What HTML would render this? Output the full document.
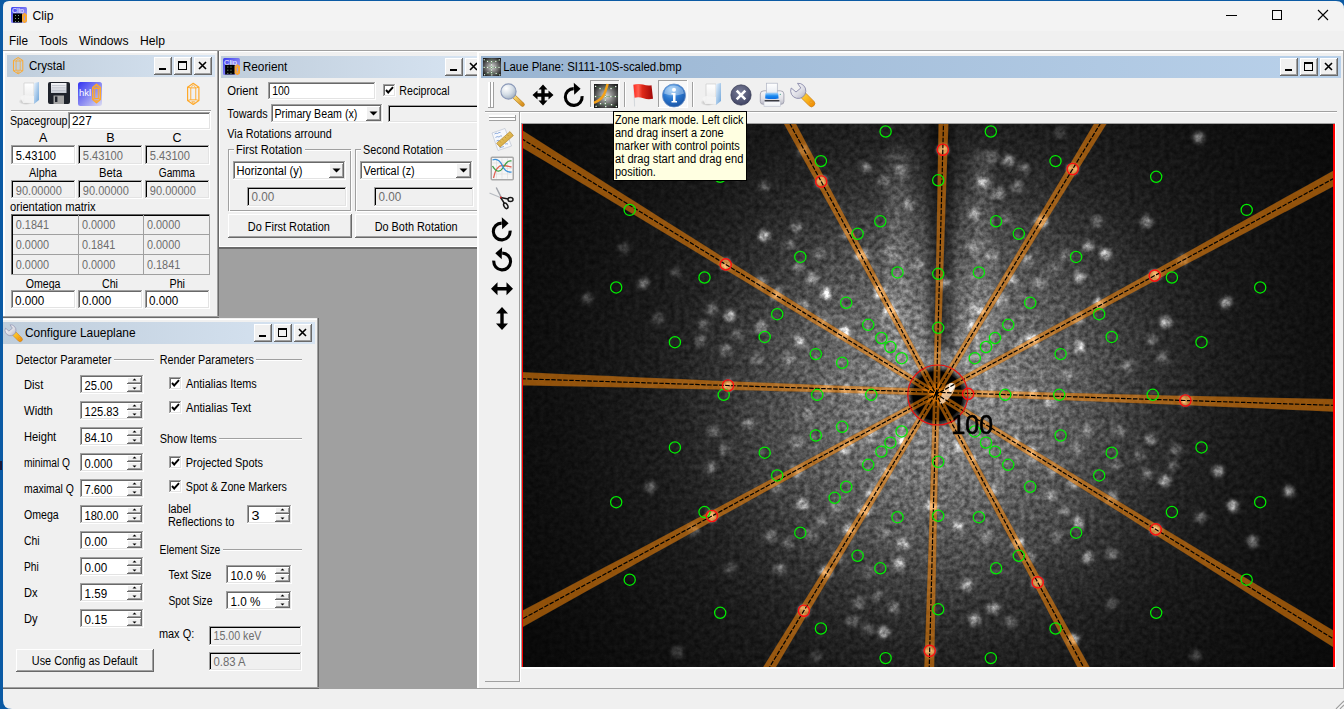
<!DOCTYPE html><html><head><meta charset="utf-8"><style>html,body{margin:0;padding:0;background:#f0f0f0;overflow:hidden}svg{display:block}text{font-family:"Liberation Sans",sans-serif}</style></head><body><svg width="1344" height="709" viewBox="0 0 1344 709" font-family="Liberation Sans" shape-rendering="auto">
<rect x="0" y="0" width="1344" height="709" fill="#f0f0f0" />
<rect x="0" y="0" width="1344" height="31" fill="#f3f3f3" />
<rect x="0" y="31" width="1344" height="19" fill="#f0f0f0" />
<g transform="translate(11,7) scale(1.0)"><linearGradient id="appg" x1="0" y1="0" x2="1" y2="1"><stop offset="0" stop-color="#3a3af0"/><stop offset="1" stop-color="#b8b8f4"/></linearGradient><rect x="0" y="0" width="16" height="16" rx="1.5" fill="url(#appg)"/><text x="1" y="6.3" font-size="7" fill="#fff" font-family="Liberation Sans" textLength="12" lengthAdjust="spacingAndGlyphs">Clip</text><rect x="2" y="6.5" width="9" height="9" fill="#000"/><g fill="#7a9a7a"><rect x="4" y="8" width="1" height="1"/><rect x="7" y="8" width="1" height="1"/><rect x="4" y="11" width="1" height="1"/><rect x="7" y="11" width="1" height="1"/><rect x="4" y="14" width="1" height="1"/><rect x="7" y="14" width="1" height="1"/></g></g>
<g fill="none" stroke="#ffa828" stroke-width="1.2" stroke-linejoin="round"><path d="M24.5 13.6 L26.4 15.0 L26.4 21.0 L24.5 22.4 L22.6 21.0 L22.6 15.0 Z"/><path d="M22.6 15.0 L23.25 15.72 L25.75 15.72 L26.4 15.0" stroke-width="0.96"/><path d="M22.6 21.0 L23.25 20.28 L25.75 20.28 L26.4 21.0" stroke-width="0.96"/><path d="M23.5 15.72 L23.5 20.28 M25.5 15.72 L25.5 20.28" stroke-width="0.8999999999999999"/><path d="M23.5 15.72 L24.5 13.9 L25.5 15.72" stroke-width="0.72"/><path d="M23.9 21.5 L24.5 22.3 L25.1 21.5 Z" stroke-width="0.72"/></g>
<text x="32.5" y="20" font-size="12" fill="#000" textLength="21.0" lengthAdjust="spacingAndGlyphs" >Clip</text>
<rect x="1226" y="15" width="11" height="1" fill="#000" />
<rect x="1272.5" y="10.5" width="9" height="9" fill="none" stroke="#000" stroke-width="1"/>
<path d="M1318 10 L1328 20 M1328 10 L1318 20" stroke="#000" stroke-width="1.1"/>
<text x="9.0" y="45" font-size="12" fill="#000" textLength="19.0" lengthAdjust="spacingAndGlyphs" >File</text>
<text x="39.0" y="45" font-size="12" fill="#000" textLength="28.5" lengthAdjust="spacingAndGlyphs" >Tools</text>
<text x="79.0" y="45" font-size="12" fill="#000" textLength="49.5" lengthAdjust="spacingAndGlyphs" >Windows</text>
<text x="140.0" y="45" font-size="12" fill="#000" textLength="25.0" lengthAdjust="spacingAndGlyphs" >Help</text>
<rect x="3" y="50" width="1341" height="1" fill="#a0a0a0" />
<rect x="3" y="51" width="1341" height="638" fill="#a0a0a0" />
<rect x="219" y="51" width="260" height="198" fill="#f0f0f0" />
<rect x="219" y="51" width="260" height="1" fill="#ffffff" />
<rect x="219" y="51" width="1" height="198" fill="#ffffff" />
<rect x="219" y="246" width="260" height="1" fill="#ffffff" />
<rect x="219" y="247" width="260" height="1" fill="#696969" />
<rect x="219" y="248" width="260" height="1" fill="#696969" />
<linearGradient id="tgr" x1="0" x2="1" y1="0" y2="0"><stop offset="0" stop-color="#bfcddb"/><stop offset="1" stop-color="#d7e4f2"/></linearGradient>
<rect x="221" y="56" width="256" height="22" fill="url(#tgr)" />
<g transform="translate(223,58) scale(1.0625)"><linearGradient id="appg" x1="0" y1="0" x2="1" y2="1"><stop offset="0" stop-color="#3a3af0"/><stop offset="1" stop-color="#b8b8f4"/></linearGradient><rect x="0" y="0" width="16" height="16" rx="1.5" fill="url(#appg)"/><text x="1" y="6.3" font-size="7" fill="#fff" font-family="Liberation Sans" textLength="12" lengthAdjust="spacingAndGlyphs">Clip</text><rect x="2" y="6.5" width="9" height="9" fill="#000"/><g fill="#7a9a7a"><rect x="4" y="8" width="1" height="1"/><rect x="7" y="8" width="1" height="1"/><rect x="4" y="11" width="1" height="1"/><rect x="7" y="11" width="1" height="1"/><rect x="4" y="14" width="1" height="1"/><rect x="7" y="14" width="1" height="1"/></g></g>
<g fill="none" stroke="#ffa828" stroke-width="1.275" stroke-linejoin="round"><path d="M237.34375 65.0125 L239.3625 66.5 L239.3625 72.875 L237.34375 74.3625 L235.325 72.875 L235.325 66.5 Z"/><path d="M235.325 66.5 L236.015625 67.265 L238.671875 67.265 L239.3625 66.5" stroke-width="1.02"/><path d="M235.325 72.875 L236.015625 72.11 L238.671875 72.11 L239.3625 72.875" stroke-width="1.02"/><path d="M236.28125 67.265 L236.28125 72.11 M238.40625 67.265 L238.40625 72.11" stroke-width="0.9562499999999999"/><path d="M236.28125 67.265 L237.34375 65.33125 L238.40625 67.265" stroke-width="0.7649999999999999"/><path d="M236.70625 73.40625 L237.34375 74.25625 L237.98125 73.40625 Z" stroke-width="0.7649999999999999"/></g>
<text x="242.7" y="71" font-size="12" fill="#000" textLength="44.7" lengthAdjust="spacingAndGlyphs" >Reorient</text>
<rect x="445" y="58" width="18" height="18" fill="#f0f0f0" />
<rect x="445" y="58" width="17" height="1" fill="#ffffff" />
<rect x="445" y="58" width="1" height="17" fill="#ffffff" />
<rect x="446" y="74" width="16" height="1" fill="#a0a0a0" />
<rect x="461" y="59" width="1" height="16" fill="#a0a0a0" />
<rect x="445" y="75" width="18" height="1" fill="#696969" />
<rect x="462" y="58" width="1" height="18" fill="#696969" />
<rect x="450" y="69" width="7" height="2" fill="#000" />
<rect x="465" y="58" width="18" height="18" fill="#f0f0f0" />
<rect x="465" y="58" width="17" height="1" fill="#ffffff" />
<rect x="465" y="58" width="1" height="17" fill="#ffffff" />
<rect x="466" y="74" width="16" height="1" fill="#a0a0a0" />
<rect x="481" y="59" width="1" height="16" fill="#a0a0a0" />
<rect x="465" y="75" width="18" height="1" fill="#696969" />
<rect x="482" y="58" width="1" height="18" fill="#696969" />
<path d="M470 63 L477 70 M477 63 L470 70" stroke="#000" stroke-width="1.6" fill="none"/>
<text x="227.2" y="95" font-size="12" fill="#000" textLength="30.8" lengthAdjust="spacingAndGlyphs" >Orient</text>
<rect x="268" y="82" width="108" height="18" fill="#ffffff" />
<rect x="268" y="82" width="107" height="1" fill="#a0a0a0" />
<rect x="268" y="82" width="1" height="17" fill="#a0a0a0" />
<rect x="269" y="83" width="105" height="1" fill="#696969" />
<rect x="269" y="83" width="1" height="15" fill="#696969" />
<rect x="269" y="98" width="106" height="1" fill="#e3e3e3" />
<rect x="374" y="83" width="1" height="16" fill="#e3e3e3" />
<rect x="268" y="99" width="108" height="1" fill="#ffffff" />
<rect x="375" y="82" width="1" height="18" fill="#ffffff" />
<text x="272.2" y="95" font-size="12" fill="#000" textLength="17.5" lengthAdjust="spacingAndGlyphs" >100</text>
<rect x="383" y="84" width="13" height="13" fill="#ffffff" />
<rect x="383" y="84" width="12" height="1" fill="#a0a0a0" />
<rect x="383" y="84" width="1" height="12" fill="#a0a0a0" />
<rect x="384" y="85" width="10" height="1" fill="#696969" />
<rect x="384" y="85" width="1" height="10" fill="#696969" />
<rect x="384" y="95" width="11" height="1" fill="#e3e3e3" />
<rect x="394" y="85" width="1" height="11" fill="#e3e3e3" />
<rect x="383" y="96" width="13" height="1" fill="#ffffff" />
<rect x="395" y="84" width="1" height="13" fill="#ffffff" />
<path d="M386 90 L388.2 92.5 L393 87.2" stroke="#000" stroke-width="1.9" fill="none"/>
<text x="399.3" y="95" font-size="12" fill="#000" textLength="50.3" lengthAdjust="spacingAndGlyphs" >Reciprocal</text>
<text x="227.3" y="118" font-size="12" fill="#000" textLength="40.3" lengthAdjust="spacingAndGlyphs" >Towards</text>
<rect x="271" y="104" width="112" height="19" fill="#ffffff" />
<rect x="271" y="104" width="111" height="1" fill="#a0a0a0" />
<rect x="271" y="104" width="1" height="18" fill="#a0a0a0" />
<rect x="272" y="105" width="109" height="1" fill="#696969" />
<rect x="272" y="105" width="1" height="16" fill="#696969" />
<rect x="272" y="121" width="110" height="1" fill="#e3e3e3" />
<rect x="381" y="105" width="1" height="17" fill="#e3e3e3" />
<rect x="271" y="122" width="112" height="1" fill="#ffffff" />
<rect x="382" y="104" width="1" height="19" fill="#ffffff" />
<rect x="366" y="106" width="15" height="15" fill="#f0f0f0" />
<rect x="366" y="106" width="14" height="1" fill="#ffffff" />
<rect x="366" y="106" width="1" height="14" fill="#ffffff" />
<rect x="367" y="119" width="13" height="1" fill="#a0a0a0" />
<rect x="379" y="107" width="1" height="13" fill="#a0a0a0" />
<rect x="366" y="120" width="15" height="1" fill="#696969" />
<rect x="380" y="106" width="1" height="15" fill="#696969" />
<path d="M369.5 111.5 L377.5 111.5 L373.5 115.5Z" fill="#000"/>
<text x="274.5" y="118" font-size="12" fill="#000" textLength="82.8" lengthAdjust="spacingAndGlyphs" >Primary Beam (x)</text>
<rect x="388" y="105" width="100" height="18" fill="#f0f0f0" />
<rect x="388" y="105" width="99" height="1" fill="#a0a0a0" />
<rect x="388" y="105" width="1" height="17" fill="#a0a0a0" />
<rect x="389" y="106" width="97" height="1" fill="#000" />
<rect x="389" y="106" width="1" height="15" fill="#000" />
<rect x="389" y="121" width="98" height="1" fill="#e3e3e3" />
<rect x="486" y="106" width="1" height="16" fill="#e3e3e3" />
<rect x="388" y="122" width="100" height="1" fill="#ffffff" />
<rect x="487" y="105" width="1" height="18" fill="#ffffff" />
<text x="227.3" y="138" font-size="12" fill="#000" textLength="104.4" lengthAdjust="spacingAndGlyphs" >Via Rotations arround</text>
<rect x="228.5" y="149.5" width="122" height="61" fill="none" stroke="#a0a0a0"/>
<rect x="229.5" y="150.5" width="122" height="61" fill="none" stroke="#ffffff"/>
<rect x="234" y="144" width="71" height="12" fill="#f0f0f0" />
<text x="236.1" y="154" font-size="12" fill="#000" textLength="66.0" lengthAdjust="spacingAndGlyphs" >First Rotation</text>
<rect x="355.5" y="149.5" width="129" height="61" fill="none" stroke="#a0a0a0"/>
<rect x="356.5" y="150.5" width="129" height="61" fill="none" stroke="#ffffff"/>
<rect x="361" y="144" width="85" height="12" fill="#f0f0f0" />
<text x="363.1" y="154" font-size="12" fill="#000" textLength="80.0" lengthAdjust="spacingAndGlyphs" >Second Rotation</text>
<rect x="233" y="161" width="113" height="19" fill="#ffffff" />
<rect x="233" y="161" width="112" height="1" fill="#a0a0a0" />
<rect x="233" y="161" width="1" height="18" fill="#a0a0a0" />
<rect x="234" y="162" width="110" height="1" fill="#696969" />
<rect x="234" y="162" width="1" height="16" fill="#696969" />
<rect x="234" y="178" width="111" height="1" fill="#e3e3e3" />
<rect x="344" y="162" width="1" height="17" fill="#e3e3e3" />
<rect x="233" y="179" width="113" height="1" fill="#ffffff" />
<rect x="345" y="161" width="1" height="19" fill="#ffffff" />
<rect x="329" y="163" width="15" height="15" fill="#f0f0f0" />
<rect x="329" y="163" width="14" height="1" fill="#ffffff" />
<rect x="329" y="163" width="1" height="14" fill="#ffffff" />
<rect x="330" y="176" width="13" height="1" fill="#a0a0a0" />
<rect x="342" y="164" width="1" height="13" fill="#a0a0a0" />
<rect x="329" y="177" width="15" height="1" fill="#696969" />
<rect x="343" y="163" width="1" height="15" fill="#696969" />
<path d="M332.5 168.5 L340.5 168.5 L336.5 172.5Z" fill="#000"/>
<text x="236.5" y="175" font-size="12" fill="#000" textLength="66.0" lengthAdjust="spacingAndGlyphs" >Horizontal (y)</text>
<rect x="247" y="187" width="100" height="20" fill="#f0f0f0" />
<rect x="247" y="187" width="99" height="1" fill="#a0a0a0" />
<rect x="247" y="187" width="1" height="19" fill="#a0a0a0" />
<rect x="248" y="188" width="97" height="1" fill="#000" />
<rect x="248" y="188" width="1" height="17" fill="#000" />
<rect x="248" y="205" width="98" height="1" fill="#e3e3e3" />
<rect x="345" y="188" width="1" height="18" fill="#e3e3e3" />
<rect x="247" y="206" width="100" height="1" fill="#ffffff" />
<rect x="346" y="187" width="1" height="20" fill="#ffffff" />
<text x="251.5" y="201" font-size="12" fill="#6d6d6d" textLength="22.7" lengthAdjust="spacingAndGlyphs" >0.00</text>
<rect x="360" y="161" width="113" height="19" fill="#ffffff" />
<rect x="360" y="161" width="112" height="1" fill="#a0a0a0" />
<rect x="360" y="161" width="1" height="18" fill="#a0a0a0" />
<rect x="361" y="162" width="110" height="1" fill="#696969" />
<rect x="361" y="162" width="1" height="16" fill="#696969" />
<rect x="361" y="178" width="111" height="1" fill="#e3e3e3" />
<rect x="471" y="162" width="1" height="17" fill="#e3e3e3" />
<rect x="360" y="179" width="113" height="1" fill="#ffffff" />
<rect x="472" y="161" width="1" height="19" fill="#ffffff" />
<rect x="456" y="163" width="15" height="15" fill="#f0f0f0" />
<rect x="456" y="163" width="14" height="1" fill="#ffffff" />
<rect x="456" y="163" width="1" height="14" fill="#ffffff" />
<rect x="457" y="176" width="13" height="1" fill="#a0a0a0" />
<rect x="469" y="164" width="1" height="13" fill="#a0a0a0" />
<rect x="456" y="177" width="15" height="1" fill="#696969" />
<rect x="470" y="163" width="1" height="15" fill="#696969" />
<path d="M459.5 168.5 L467.5 168.5 L463.5 172.5Z" fill="#000"/>
<text x="363.5" y="175" font-size="12" fill="#000" textLength="51.2" lengthAdjust="spacingAndGlyphs" >Vertical (z)</text>
<rect x="374" y="187" width="100" height="20" fill="#f0f0f0" />
<rect x="374" y="187" width="99" height="1" fill="#a0a0a0" />
<rect x="374" y="187" width="1" height="19" fill="#a0a0a0" />
<rect x="375" y="188" width="97" height="1" fill="#000" />
<rect x="375" y="188" width="1" height="17" fill="#000" />
<rect x="375" y="205" width="98" height="1" fill="#e3e3e3" />
<rect x="472" y="188" width="1" height="18" fill="#e3e3e3" />
<rect x="374" y="206" width="100" height="1" fill="#ffffff" />
<rect x="473" y="187" width="1" height="20" fill="#ffffff" />
<text x="378.5" y="201" font-size="12" fill="#6d6d6d" textLength="22.7" lengthAdjust="spacingAndGlyphs" >0.00</text>
<rect x="228" y="214" width="124" height="24" fill="#f0f0f0" />
<rect x="228" y="214" width="123" height="1" fill="#ffffff" />
<rect x="228" y="214" width="1" height="23" fill="#ffffff" />
<rect x="229" y="236" width="122" height="1" fill="#a0a0a0" />
<rect x="350" y="215" width="1" height="22" fill="#a0a0a0" />
<rect x="228" y="237" width="124" height="1" fill="#696969" />
<rect x="351" y="214" width="1" height="24" fill="#696969" />
<text x="247.8" y="231" font-size="12" fill="#000" textLength="82.0" lengthAdjust="spacingAndGlyphs" >Do First Rotation</text>
<rect x="355" y="214" width="130" height="24" fill="#f0f0f0" />
<rect x="355" y="214" width="129" height="1" fill="#ffffff" />
<rect x="355" y="214" width="1" height="23" fill="#ffffff" />
<rect x="356" y="236" width="128" height="1" fill="#a0a0a0" />
<rect x="483" y="215" width="1" height="22" fill="#a0a0a0" />
<rect x="355" y="237" width="130" height="1" fill="#696969" />
<rect x="484" y="214" width="1" height="24" fill="#696969" />
<text x="374.7" y="231" font-size="12" fill="#000" textLength="82.8" lengthAdjust="spacingAndGlyphs" >Do Both Rotation</text>
<rect x="3" y="51" width="216" height="267" fill="#f0f0f0" />
<rect x="3" y="51" width="216" height="1" fill="#ffffff" />
<rect x="3" y="52" width="216" height="1" fill="#ffffff" />
<rect x="3" y="51" width="1" height="267" fill="#ffffff" />
<rect x="4" y="51" width="1" height="267" fill="#ffffff" />
<rect x="217" y="51" width="1" height="267" fill="#a0a0a0" />
<rect x="218" y="51" width="1" height="267" fill="#696969" />
<rect x="3" y="316" width="216" height="1" fill="#a0a0a0" />
<rect x="3" y="317" width="216" height="1" fill="#696969" />
<linearGradient id="tgc" x1="0" x2="1" y1="0" y2="0"><stop offset="0" stop-color="#bfcddb"/><stop offset="1" stop-color="#d7e4f2"/></linearGradient>
<rect x="7" y="55" width="208" height="22" fill="url(#tgc)" />
<g fill="none" stroke="#ffa828" stroke-width="0.95" stroke-linejoin="round"><path d="M18.15 57.475 L22.825 60.46 L22.825 70.84 L18.15 73.825 L13.475 70.84 L13.475 60.46 Z"/><path d="M13.475 60.46 L15.575 61.03 L20.725 61.03 L22.825 60.46" stroke-width="0.76"/><path d="M13.475 70.84 L15.575 70.27000000000001 L20.725 70.27000000000001 L22.825 70.84" stroke-width="0.76"/><path d="M16.09 61.03 L16.09 70.27000000000001 M20.21 61.03 L20.21 70.27000000000001" stroke-width="0.7124999999999999"/><path d="M16.09 61.03 L18.15 58.557 L20.21 61.03" stroke-width="0.57"/><path d="M16.914 71.705 L18.15 73.089 L19.386 71.705 Z" stroke-width="0.57"/></g>
<text x="29.0" y="70" font-size="12" fill="#000" textLength="36.0" lengthAdjust="spacingAndGlyphs" >Crystal</text>
<rect x="154" y="57" width="18" height="18" fill="#f0f0f0" />
<rect x="154" y="57" width="17" height="1" fill="#ffffff" />
<rect x="154" y="57" width="1" height="17" fill="#ffffff" />
<rect x="155" y="73" width="16" height="1" fill="#a0a0a0" />
<rect x="170" y="58" width="1" height="16" fill="#a0a0a0" />
<rect x="154" y="74" width="18" height="1" fill="#696969" />
<rect x="171" y="57" width="1" height="18" fill="#696969" />
<rect x="159" y="68" width="7" height="2" fill="#000" />
<rect x="174" y="57" width="18" height="18" fill="#f0f0f0" />
<rect x="174" y="57" width="17" height="1" fill="#ffffff" />
<rect x="174" y="57" width="1" height="17" fill="#ffffff" />
<rect x="175" y="73" width="16" height="1" fill="#a0a0a0" />
<rect x="190" y="58" width="1" height="16" fill="#a0a0a0" />
<rect x="174" y="74" width="18" height="1" fill="#696969" />
<rect x="191" y="57" width="1" height="18" fill="#696969" />
<rect x="178.5" y="61.5" width="8" height="8" fill="none" stroke="#000"/>
<rect x="178" y="61" width="9" height="2" fill="#000" />
<rect x="194" y="57" width="18" height="18" fill="#f0f0f0" />
<rect x="194" y="57" width="17" height="1" fill="#ffffff" />
<rect x="194" y="57" width="1" height="17" fill="#ffffff" />
<rect x="195" y="73" width="16" height="1" fill="#a0a0a0" />
<rect x="210" y="58" width="1" height="16" fill="#a0a0a0" />
<rect x="194" y="74" width="18" height="1" fill="#696969" />
<rect x="211" y="57" width="1" height="18" fill="#696969" />
<path d="M199 62 L206 69 M206 62 L199 69" stroke="#000" stroke-width="1.6" fill="none"/>
<g transform="translate(19,82)"><linearGradient id="fldb" x1="0" y1="0" x2="1" y2="1"><stop offset="0" stop-color="#e8f2fc"/><stop offset="1" stop-color="#6aa2d8"/></linearGradient><linearGradient id="fldw" x1="0" y1="0" x2="0" y2="1"><stop offset="0" stop-color="#ffffff"/><stop offset="1" stop-color="#e6e6e6"/></linearGradient><radialGradient id="fsh" cx="0.5" cy="0.5" r="0.5"><stop offset="0" stop-color="#000" stop-opacity="0.35"/><stop offset="1" stop-color="#000" stop-opacity="0"/></radialGradient><ellipse cx="7" cy="19.5" rx="7.5" ry="3.5" fill="url(#fsh)"/><path d="M5 1 L15 1 L15 21 L5 20 Z" fill="url(#fldw)" stroke="#c8c8c8" stroke-width="0.6"/><path d="M1 15 L5 13 L15 14 L15 21 L4 21 Z" fill="#f4f4f4" opacity="0.9"/><path d="M15 1 L20 0 L20 18 L15 22 Z" fill="url(#fldb)"/></g>
<g transform="translate(48,82)"><rect x="0" y="0" width="22" height="22" rx="2" fill="#1f232b"/><linearGradient id="flpl" x1="0" y1="0" x2="0" y2="1"><stop offset="0" stop-color="#f4f5f8"/><stop offset="1" stop-color="#c8ccd4"/></linearGradient><rect x="3" y="1" width="15.5" height="10" fill="url(#flpl)"/><g fill="#b8bcc6"><rect x="4" y="3" width="13.5" height="0.7"/><rect x="4" y="5.5" width="13.5" height="0.7"/><rect x="4" y="8" width="13.5" height="0.7"/></g><rect x="5.5" y="13.5" width="10.5" height="8.5" fill="#a4a4a4"/><rect x="7" y="14.5" width="2.4" height="5.5" fill="#1f232b"/></g>
<g transform="translate(78,82)"><linearGradient id="hklg" x1="0" y1="0" x2="1" y2="1"><stop offset="0" stop-color="#3232f2"/><stop offset="1" stop-color="#dcdcf2"/></linearGradient><rect x="0" y="0" width="24" height="24" rx="2.5" fill="url(#hklg)"/><text x="1" y="13.5" font-size="9" fill="#fff" font-family="Liberation Sans" textLength="12" lengthAdjust="spacingAndGlyphs">hkl</text></g>
<g fill="none" stroke="#ffa828" stroke-width="1.4" stroke-linejoin="round"><path d="M96.5 84.2 L100.3 87.5 L100.3 99.5 L96.5 102.8 L92.7 99.5 L92.7 87.5 Z"/><path d="M92.7 87.5 L94.25 88.34 L98.75 88.34 L100.3 87.5" stroke-width="1.1199999999999999"/><path d="M92.7 99.5 L94.25 98.66 L98.75 98.66 L100.3 99.5" stroke-width="1.1199999999999999"/><path d="M94.7 88.34 L94.7 98.66 M98.3 88.34 L98.3 98.66" stroke-width="1.0499999999999998"/><path d="M94.7 88.34 L96.5 85.3 L98.3 88.34" stroke-width="0.84"/><path d="M95.42 100.5 L96.5 102.1 L97.58 100.5 Z" stroke-width="0.84"/></g>
<g fill="none" stroke="#ffa828" stroke-width="1.2" stroke-linejoin="round"><path d="M193.25 83.3 L198.9 87.16 L198.9 100.54 L193.25 104.4 L187.6 100.54 L187.6 87.16 Z"/><path d="M187.6 87.16 L190.125 87.88 L196.375 87.88 L198.9 87.16" stroke-width="0.96"/><path d="M187.6 100.54 L190.125 99.82000000000001 L196.375 99.82000000000001 L198.9 100.54" stroke-width="0.96"/><path d="M190.75 87.88 L190.75 99.82000000000001 M195.75 87.88 L195.75 99.82000000000001" stroke-width="0.8999999999999999"/><path d="M190.75 87.88 L193.25 84.70700000000001 L195.75 87.88" stroke-width="0.72"/><path d="M191.75 101.655 L193.25 103.439 L194.75 101.655 Z" stroke-width="0.72"/></g>
<rect x="11" y="110" width="200" height="1" fill="#a0a0a0" />
<rect x="11" y="111" width="200" height="1" fill="#ffffff" />
<text x="10.0" y="125" font-size="12" fill="#000" textLength="57.5" lengthAdjust="spacingAndGlyphs" >Spacegroup</text>
<rect x="68" y="112" width="143" height="18" fill="#ffffff" />
<rect x="68" y="112" width="142" height="1" fill="#a0a0a0" />
<rect x="68" y="112" width="1" height="17" fill="#a0a0a0" />
<rect x="69" y="113" width="140" height="1" fill="#696969" />
<rect x="69" y="113" width="1" height="15" fill="#696969" />
<rect x="69" y="128" width="141" height="1" fill="#e3e3e3" />
<rect x="209" y="113" width="1" height="16" fill="#e3e3e3" />
<rect x="68" y="129" width="143" height="1" fill="#ffffff" />
<rect x="210" y="112" width="1" height="18" fill="#ffffff" />
<text x="72.0" y="125" font-size="12" fill="#000" textLength="19.7" lengthAdjust="spacingAndGlyphs" >227</text>
<text x="38.9" y="142" font-size="12" fill="#000" textLength="8.4" lengthAdjust="spacingAndGlyphs" >A</text>
<rect x="11" y="145" width="65" height="20" fill="#ffffff" />
<rect x="11" y="145" width="64" height="1" fill="#a0a0a0" />
<rect x="11" y="145" width="1" height="19" fill="#a0a0a0" />
<rect x="12" y="146" width="62" height="1" fill="#696969" />
<rect x="12" y="146" width="1" height="17" fill="#696969" />
<rect x="12" y="163" width="63" height="1" fill="#e3e3e3" />
<rect x="74" y="146" width="1" height="18" fill="#e3e3e3" />
<rect x="11" y="164" width="65" height="1" fill="#ffffff" />
<rect x="75" y="145" width="1" height="20" fill="#ffffff" />
<text x="15.8" y="160" font-size="12" fill="#000" textLength="40.2" lengthAdjust="spacingAndGlyphs" >5.43100</text>
<text x="106.2" y="142" font-size="12" fill="#000" textLength="8.4" lengthAdjust="spacingAndGlyphs" >B</text>
<rect x="78" y="145" width="65" height="20" fill="#f0f0f0" />
<rect x="78" y="145" width="64" height="1" fill="#a0a0a0" />
<rect x="78" y="145" width="1" height="19" fill="#a0a0a0" />
<rect x="79" y="146" width="62" height="1" fill="#000" />
<rect x="79" y="146" width="1" height="17" fill="#000" />
<rect x="79" y="163" width="63" height="1" fill="#e3e3e3" />
<rect x="141" y="146" width="1" height="18" fill="#e3e3e3" />
<rect x="78" y="164" width="65" height="1" fill="#ffffff" />
<rect x="142" y="145" width="1" height="20" fill="#ffffff" />
<text x="82.8" y="160" font-size="12" fill="#6d6d6d" textLength="40.2" lengthAdjust="spacingAndGlyphs" >5.43100</text>
<text x="172.4" y="142" font-size="12" fill="#000" textLength="9.0" lengthAdjust="spacingAndGlyphs" >C</text>
<rect x="145" y="145" width="65" height="20" fill="#f0f0f0" />
<rect x="145" y="145" width="64" height="1" fill="#a0a0a0" />
<rect x="145" y="145" width="1" height="19" fill="#a0a0a0" />
<rect x="146" y="146" width="62" height="1" fill="#000" />
<rect x="146" y="146" width="1" height="17" fill="#000" />
<rect x="146" y="163" width="63" height="1" fill="#e3e3e3" />
<rect x="208" y="146" width="1" height="18" fill="#e3e3e3" />
<rect x="145" y="164" width="65" height="1" fill="#ffffff" />
<rect x="209" y="145" width="1" height="20" fill="#ffffff" />
<text x="149.8" y="160" font-size="12" fill="#6d6d6d" textLength="40.2" lengthAdjust="spacingAndGlyphs" >5.43100</text>
<text x="29.0" y="177" font-size="12" fill="#000" textLength="27.8" lengthAdjust="spacingAndGlyphs" >Alpha</text>
<rect x="11" y="180" width="65" height="19" fill="#f0f0f0" />
<rect x="11" y="180" width="64" height="1" fill="#a0a0a0" />
<rect x="11" y="180" width="1" height="18" fill="#a0a0a0" />
<rect x="12" y="181" width="62" height="1" fill="#000" />
<rect x="12" y="181" width="1" height="16" fill="#000" />
<rect x="12" y="197" width="63" height="1" fill="#e3e3e3" />
<rect x="74" y="181" width="1" height="17" fill="#e3e3e3" />
<rect x="11" y="198" width="65" height="1" fill="#ffffff" />
<rect x="75" y="180" width="1" height="19" fill="#ffffff" />
<text x="15.8" y="195" font-size="12" fill="#6d6d6d" textLength="46.0" lengthAdjust="spacingAndGlyphs" >90.00000</text>
<text x="99.0" y="177" font-size="12" fill="#000" textLength="23.2" lengthAdjust="spacingAndGlyphs" >Beta</text>
<rect x="78" y="180" width="65" height="19" fill="#f0f0f0" />
<rect x="78" y="180" width="64" height="1" fill="#a0a0a0" />
<rect x="78" y="180" width="1" height="18" fill="#a0a0a0" />
<rect x="79" y="181" width="62" height="1" fill="#000" />
<rect x="79" y="181" width="1" height="16" fill="#000" />
<rect x="79" y="197" width="63" height="1" fill="#e3e3e3" />
<rect x="141" y="181" width="1" height="17" fill="#e3e3e3" />
<rect x="78" y="198" width="65" height="1" fill="#ffffff" />
<rect x="142" y="180" width="1" height="19" fill="#ffffff" />
<text x="82.8" y="195" font-size="12" fill="#6d6d6d" textLength="46.0" lengthAdjust="spacingAndGlyphs" >90.00000</text>
<text x="158.8" y="177" font-size="12" fill="#000" textLength="36.0" lengthAdjust="spacingAndGlyphs" >Gamma</text>
<rect x="145" y="180" width="65" height="19" fill="#f0f0f0" />
<rect x="145" y="180" width="64" height="1" fill="#a0a0a0" />
<rect x="145" y="180" width="1" height="18" fill="#a0a0a0" />
<rect x="146" y="181" width="62" height="1" fill="#000" />
<rect x="146" y="181" width="1" height="16" fill="#000" />
<rect x="146" y="197" width="63" height="1" fill="#e3e3e3" />
<rect x="208" y="181" width="1" height="17" fill="#e3e3e3" />
<rect x="145" y="198" width="65" height="1" fill="#ffffff" />
<rect x="209" y="180" width="1" height="19" fill="#ffffff" />
<text x="149.8" y="195" font-size="12" fill="#6d6d6d" textLength="46.0" lengthAdjust="spacingAndGlyphs" >90.00000</text>
<text x="10.0" y="211" font-size="12" fill="#000" textLength="85.5" lengthAdjust="spacingAndGlyphs" >orientation matrix</text>
<rect x="11" y="214" width="199" height="61" fill="#f0f0f0" />
<rect x="11" y="214" width="199" height="1" fill="#696969" />
<rect x="11" y="214" width="1" height="61" fill="#696969" />
<rect x="12" y="215" width="198" height="1" fill="#000" />
<rect x="12" y="215" width="1" height="60" fill="#000" />
<rect x="11" y="274" width="199" height="1" fill="#a0a0a0" />
<rect x="209" y="214" width="1" height="61" fill="#a0a0a0" />
<rect x="13" y="234" width="196" height="1" fill="#a0a0a0" />
<rect x="13" y="254" width="196" height="1" fill="#a0a0a0" />
<rect x="78" y="215" width="1" height="59" fill="#a0a0a0" />
<rect x="143" y="215" width="1" height="59" fill="#a0a0a0" />
<text x="15.8" y="229" font-size="12" fill="#6d6d6d" textLength="33.2" lengthAdjust="spacingAndGlyphs" >0.1841</text>
<text x="82.0" y="229" font-size="12" fill="#6d6d6d" textLength="33.2" lengthAdjust="spacingAndGlyphs" >0.0000</text>
<text x="147.0" y="229" font-size="12" fill="#6d6d6d" textLength="33.2" lengthAdjust="spacingAndGlyphs" >0.0000</text>
<text x="15.8" y="249" font-size="12" fill="#6d6d6d" textLength="33.2" lengthAdjust="spacingAndGlyphs" >0.0000</text>
<text x="82.0" y="249" font-size="12" fill="#6d6d6d" textLength="33.2" lengthAdjust="spacingAndGlyphs" >0.1841</text>
<text x="147.0" y="249" font-size="12" fill="#6d6d6d" textLength="33.2" lengthAdjust="spacingAndGlyphs" >0.0000</text>
<text x="15.8" y="269" font-size="12" fill="#6d6d6d" textLength="33.2" lengthAdjust="spacingAndGlyphs" >0.0000</text>
<text x="82.0" y="269" font-size="12" fill="#6d6d6d" textLength="33.2" lengthAdjust="spacingAndGlyphs" >0.0000</text>
<text x="147.0" y="269" font-size="12" fill="#6d6d6d" textLength="33.2" lengthAdjust="spacingAndGlyphs" >0.1841</text>
<text x="25.7" y="288" font-size="12" fill="#000" textLength="34.8" lengthAdjust="spacingAndGlyphs" >Omega</text>
<rect x="11" y="290" width="65" height="19" fill="#ffffff" />
<rect x="11" y="290" width="64" height="1" fill="#a0a0a0" />
<rect x="11" y="290" width="1" height="18" fill="#a0a0a0" />
<rect x="12" y="291" width="62" height="1" fill="#696969" />
<rect x="12" y="291" width="1" height="16" fill="#696969" />
<rect x="12" y="307" width="63" height="1" fill="#e3e3e3" />
<rect x="74" y="291" width="1" height="17" fill="#e3e3e3" />
<rect x="11" y="308" width="65" height="1" fill="#ffffff" />
<rect x="75" y="290" width="1" height="19" fill="#ffffff" />
<text x="15.0" y="305" font-size="12" fill="#000" textLength="29.2" lengthAdjust="spacingAndGlyphs" >0.000</text>
<text x="102.0" y="288" font-size="12" fill="#000" textLength="16.0" lengthAdjust="spacingAndGlyphs" >Chi</text>
<rect x="78" y="290" width="65" height="19" fill="#ffffff" />
<rect x="78" y="290" width="64" height="1" fill="#a0a0a0" />
<rect x="78" y="290" width="1" height="18" fill="#a0a0a0" />
<rect x="79" y="291" width="62" height="1" fill="#696969" />
<rect x="79" y="291" width="1" height="16" fill="#696969" />
<rect x="79" y="307" width="63" height="1" fill="#e3e3e3" />
<rect x="141" y="291" width="1" height="17" fill="#e3e3e3" />
<rect x="78" y="308" width="65" height="1" fill="#ffffff" />
<rect x="142" y="290" width="1" height="19" fill="#ffffff" />
<text x="82.0" y="305" font-size="12" fill="#000" textLength="29.2" lengthAdjust="spacingAndGlyphs" >0.000</text>
<text x="169.5" y="288" font-size="12" fill="#000" textLength="15.5" lengthAdjust="spacingAndGlyphs" >Phi</text>
<rect x="145" y="290" width="65" height="19" fill="#ffffff" />
<rect x="145" y="290" width="64" height="1" fill="#a0a0a0" />
<rect x="145" y="290" width="1" height="18" fill="#a0a0a0" />
<rect x="146" y="291" width="62" height="1" fill="#696969" />
<rect x="146" y="291" width="1" height="16" fill="#696969" />
<rect x="146" y="307" width="63" height="1" fill="#e3e3e3" />
<rect x="208" y="291" width="1" height="17" fill="#e3e3e3" />
<rect x="145" y="308" width="65" height="1" fill="#ffffff" />
<rect x="209" y="290" width="1" height="19" fill="#ffffff" />
<text x="149.0" y="305" font-size="12" fill="#000" textLength="29.2" lengthAdjust="spacingAndGlyphs" >0.000</text>
<rect x="0" y="318" width="319" height="371" fill="#f0f0f0" />
<rect x="0" y="318" width="319" height="1" fill="#f0f0f0" />
<rect x="0" y="319" width="319" height="1" fill="#ffffff" />
<rect x="317" y="318" width="1" height="371" fill="#a0a0a0" />
<rect x="318" y="318" width="1" height="371" fill="#696969" />
<rect x="0" y="687" width="319" height="1" fill="#a0a0a0" />
<rect x="0" y="688" width="319" height="1" fill="#696969" />
<linearGradient id="tgf" x1="0" x2="1" y1="0" y2="0"><stop offset="0" stop-color="#bfcddb"/><stop offset="1" stop-color="#d7e4f2"/></linearGradient>
<rect x="3" y="322" width="312" height="22" fill="url(#tgf)" />
<g transform="translate(4.6,321) scale(0.72)"><linearGradient id="wrs" x1="0" y1="0" x2="1" y2="1"><stop offset="0" stop-color="#ffffff"/><stop offset="0.6" stop-color="#dcdce4"/><stop offset="1" stop-color="#b0b0c0"/></linearGradient><linearGradient id="wro" x1="0" y1="0" x2="1" y2="1"><stop offset="0" stop-color="#ffd838"/><stop offset="1" stop-color="#f08800"/></linearGradient><path d="M11.2 19.8 L19.2 27.8 A3.25 3.25 0 0 0 23.8 23.2 L15.8 15.2 Z" fill="url(#wro)" stroke="#c87810" stroke-width="0.7"/><circle cx="21" cy="24.2" r="1.2" fill="#f8b030" stroke="#e08818" stroke-width="0.6"/><path d="M7.5 5.3 L10.8 10 L6 14 L1.2 10 A7.6 7.6 0 1 0 7.5 5.3 Z" fill="url(#wrs)" stroke="#8a8aaa" stroke-width="0.9" stroke-linejoin="round"/></g>
<text x="25.0" y="337" font-size="12" fill="#000" textLength="110.5" lengthAdjust="spacingAndGlyphs" >Configure Laueplane</text>
<rect x="254" y="324" width="18" height="18" fill="#f0f0f0" />
<rect x="254" y="324" width="17" height="1" fill="#ffffff" />
<rect x="254" y="324" width="1" height="17" fill="#ffffff" />
<rect x="255" y="340" width="16" height="1" fill="#a0a0a0" />
<rect x="270" y="325" width="1" height="16" fill="#a0a0a0" />
<rect x="254" y="341" width="18" height="1" fill="#696969" />
<rect x="271" y="324" width="1" height="18" fill="#696969" />
<rect x="259" y="335" width="7" height="2" fill="#000" />
<rect x="274" y="324" width="18" height="18" fill="#f0f0f0" />
<rect x="274" y="324" width="17" height="1" fill="#ffffff" />
<rect x="274" y="324" width="1" height="17" fill="#ffffff" />
<rect x="275" y="340" width="16" height="1" fill="#a0a0a0" />
<rect x="290" y="325" width="1" height="16" fill="#a0a0a0" />
<rect x="274" y="341" width="18" height="1" fill="#696969" />
<rect x="291" y="324" width="1" height="18" fill="#696969" />
<rect x="278.5" y="328.5" width="8" height="8" fill="none" stroke="#000"/>
<rect x="278" y="328" width="9" height="2" fill="#000" />
<rect x="294" y="324" width="18" height="18" fill="#f0f0f0" />
<rect x="294" y="324" width="17" height="1" fill="#ffffff" />
<rect x="294" y="324" width="1" height="17" fill="#ffffff" />
<rect x="295" y="340" width="16" height="1" fill="#a0a0a0" />
<rect x="310" y="325" width="1" height="16" fill="#a0a0a0" />
<rect x="294" y="341" width="18" height="1" fill="#696969" />
<rect x="311" y="324" width="1" height="18" fill="#696969" />
<path d="M299 329 L306 336 M306 329 L299 336" stroke="#000" stroke-width="1.6" fill="none"/>
<text x="15.8" y="364" font-size="12" fill="#000" textLength="95.5" lengthAdjust="spacingAndGlyphs" >Detector Parameter</text>
<rect x="114" y="359" width="40" height="1" fill="#a0a0a0" />
<rect x="114" y="360" width="40" height="1" fill="#ffffff" />
<text x="159.8" y="364" font-size="12" fill="#000" textLength="94.0" lengthAdjust="spacingAndGlyphs" >Render Parameters</text>
<rect x="256" y="359" width="46" height="1" fill="#a0a0a0" />
<rect x="256" y="360" width="46" height="1" fill="#ffffff" />
<text x="24.0" y="389" font-size="12" fill="#000" textLength="19.3" lengthAdjust="spacingAndGlyphs" >Dist</text>
<rect x="80" y="375" width="64" height="19" fill="#ffffff" />
<rect x="80" y="375" width="63" height="1" fill="#a0a0a0" />
<rect x="80" y="375" width="1" height="18" fill="#a0a0a0" />
<rect x="81" y="376" width="61" height="1" fill="#696969" />
<rect x="81" y="376" width="1" height="16" fill="#696969" />
<rect x="81" y="392" width="62" height="1" fill="#e3e3e3" />
<rect x="142" y="376" width="1" height="17" fill="#e3e3e3" />
<rect x="80" y="393" width="64" height="1" fill="#ffffff" />
<rect x="143" y="375" width="1" height="19" fill="#ffffff" />
<rect x="127" y="377" width="15" height="7" fill="#f0f0f0" />
<rect x="127" y="377" width="14" height="1" fill="#ffffff" />
<rect x="127" y="377" width="1" height="6" fill="#ffffff" />
<rect x="128" y="382" width="13" height="1" fill="#a0a0a0" />
<rect x="140" y="378" width="1" height="5" fill="#a0a0a0" />
<rect x="127" y="383" width="15" height="1" fill="#696969" />
<rect x="141" y="377" width="1" height="7" fill="#696969" />
<rect x="127" y="384" width="15" height="8" fill="#f0f0f0" />
<rect x="127" y="384" width="14" height="1" fill="#ffffff" />
<rect x="127" y="384" width="1" height="7" fill="#ffffff" />
<rect x="128" y="390" width="13" height="1" fill="#a0a0a0" />
<rect x="140" y="385" width="1" height="6" fill="#a0a0a0" />
<rect x="127" y="391" width="15" height="1" fill="#696969" />
<rect x="141" y="384" width="1" height="8" fill="#696969" />
<path d="M132.5 380.5 L136.5 380.5 L134.5 378.5Z" fill="#000"/>
<path d="M132.5 387.5 L136.5 387.5 L134.5 389.5Z" fill="#000"/>
<text x="84.5" y="390" font-size="12" fill="#000" textLength="28.0" lengthAdjust="spacingAndGlyphs" >25.00</text>
<text x="24.0" y="415" font-size="12" fill="#000" textLength="28.8" lengthAdjust="spacingAndGlyphs" >Width</text>
<rect x="80" y="401" width="64" height="19" fill="#ffffff" />
<rect x="80" y="401" width="63" height="1" fill="#a0a0a0" />
<rect x="80" y="401" width="1" height="18" fill="#a0a0a0" />
<rect x="81" y="402" width="61" height="1" fill="#696969" />
<rect x="81" y="402" width="1" height="16" fill="#696969" />
<rect x="81" y="418" width="62" height="1" fill="#e3e3e3" />
<rect x="142" y="402" width="1" height="17" fill="#e3e3e3" />
<rect x="80" y="419" width="64" height="1" fill="#ffffff" />
<rect x="143" y="401" width="1" height="19" fill="#ffffff" />
<rect x="127" y="403" width="15" height="7" fill="#f0f0f0" />
<rect x="127" y="403" width="14" height="1" fill="#ffffff" />
<rect x="127" y="403" width="1" height="6" fill="#ffffff" />
<rect x="128" y="408" width="13" height="1" fill="#a0a0a0" />
<rect x="140" y="404" width="1" height="5" fill="#a0a0a0" />
<rect x="127" y="409" width="15" height="1" fill="#696969" />
<rect x="141" y="403" width="1" height="7" fill="#696969" />
<rect x="127" y="410" width="15" height="8" fill="#f0f0f0" />
<rect x="127" y="410" width="14" height="1" fill="#ffffff" />
<rect x="127" y="410" width="1" height="7" fill="#ffffff" />
<rect x="128" y="416" width="13" height="1" fill="#a0a0a0" />
<rect x="140" y="411" width="1" height="6" fill="#a0a0a0" />
<rect x="127" y="417" width="15" height="1" fill="#696969" />
<rect x="141" y="410" width="1" height="8" fill="#696969" />
<path d="M132.5 406.5 L136.5 406.5 L134.5 404.5Z" fill="#000"/>
<path d="M132.5 413.5 L136.5 413.5 L134.5 415.5Z" fill="#000"/>
<text x="84.5" y="416" font-size="12" fill="#000" textLength="34.2" lengthAdjust="spacingAndGlyphs" >125.83</text>
<text x="24.0" y="441" font-size="12" fill="#000" textLength="32.2" lengthAdjust="spacingAndGlyphs" >Height</text>
<rect x="80" y="427" width="64" height="19" fill="#ffffff" />
<rect x="80" y="427" width="63" height="1" fill="#a0a0a0" />
<rect x="80" y="427" width="1" height="18" fill="#a0a0a0" />
<rect x="81" y="428" width="61" height="1" fill="#696969" />
<rect x="81" y="428" width="1" height="16" fill="#696969" />
<rect x="81" y="444" width="62" height="1" fill="#e3e3e3" />
<rect x="142" y="428" width="1" height="17" fill="#e3e3e3" />
<rect x="80" y="445" width="64" height="1" fill="#ffffff" />
<rect x="143" y="427" width="1" height="19" fill="#ffffff" />
<rect x="127" y="429" width="15" height="7" fill="#f0f0f0" />
<rect x="127" y="429" width="14" height="1" fill="#ffffff" />
<rect x="127" y="429" width="1" height="6" fill="#ffffff" />
<rect x="128" y="434" width="13" height="1" fill="#a0a0a0" />
<rect x="140" y="430" width="1" height="5" fill="#a0a0a0" />
<rect x="127" y="435" width="15" height="1" fill="#696969" />
<rect x="141" y="429" width="1" height="7" fill="#696969" />
<rect x="127" y="436" width="15" height="8" fill="#f0f0f0" />
<rect x="127" y="436" width="14" height="1" fill="#ffffff" />
<rect x="127" y="436" width="1" height="7" fill="#ffffff" />
<rect x="128" y="442" width="13" height="1" fill="#a0a0a0" />
<rect x="140" y="437" width="1" height="6" fill="#a0a0a0" />
<rect x="127" y="443" width="15" height="1" fill="#696969" />
<rect x="141" y="436" width="1" height="8" fill="#696969" />
<path d="M132.5 432.5 L136.5 432.5 L134.5 430.5Z" fill="#000"/>
<path d="M132.5 439.5 L136.5 439.5 L134.5 441.5Z" fill="#000"/>
<text x="84.5" y="442" font-size="12" fill="#000" textLength="28.0" lengthAdjust="spacingAndGlyphs" >84.10</text>
<text x="24.0" y="467" font-size="12" fill="#000" textLength="46.0" lengthAdjust="spacingAndGlyphs" >minimal Q</text>
<rect x="80" y="453" width="64" height="19" fill="#ffffff" />
<rect x="80" y="453" width="63" height="1" fill="#a0a0a0" />
<rect x="80" y="453" width="1" height="18" fill="#a0a0a0" />
<rect x="81" y="454" width="61" height="1" fill="#696969" />
<rect x="81" y="454" width="1" height="16" fill="#696969" />
<rect x="81" y="470" width="62" height="1" fill="#e3e3e3" />
<rect x="142" y="454" width="1" height="17" fill="#e3e3e3" />
<rect x="80" y="471" width="64" height="1" fill="#ffffff" />
<rect x="143" y="453" width="1" height="19" fill="#ffffff" />
<rect x="127" y="455" width="15" height="7" fill="#f0f0f0" />
<rect x="127" y="455" width="14" height="1" fill="#ffffff" />
<rect x="127" y="455" width="1" height="6" fill="#ffffff" />
<rect x="128" y="460" width="13" height="1" fill="#a0a0a0" />
<rect x="140" y="456" width="1" height="5" fill="#a0a0a0" />
<rect x="127" y="461" width="15" height="1" fill="#696969" />
<rect x="141" y="455" width="1" height="7" fill="#696969" />
<rect x="127" y="462" width="15" height="8" fill="#f0f0f0" />
<rect x="127" y="462" width="14" height="1" fill="#ffffff" />
<rect x="127" y="462" width="1" height="7" fill="#ffffff" />
<rect x="128" y="468" width="13" height="1" fill="#a0a0a0" />
<rect x="140" y="463" width="1" height="6" fill="#a0a0a0" />
<rect x="127" y="469" width="15" height="1" fill="#696969" />
<rect x="141" y="462" width="1" height="8" fill="#696969" />
<path d="M132.5 458.5 L136.5 458.5 L134.5 456.5Z" fill="#000"/>
<path d="M132.5 465.5 L136.5 465.5 L134.5 467.5Z" fill="#000"/>
<text x="84.5" y="468" font-size="12" fill="#000" textLength="28.0" lengthAdjust="spacingAndGlyphs" >0.000</text>
<text x="24.0" y="493" font-size="12" fill="#000" textLength="49.8" lengthAdjust="spacingAndGlyphs" >maximal Q</text>
<rect x="80" y="479" width="64" height="19" fill="#ffffff" />
<rect x="80" y="479" width="63" height="1" fill="#a0a0a0" />
<rect x="80" y="479" width="1" height="18" fill="#a0a0a0" />
<rect x="81" y="480" width="61" height="1" fill="#696969" />
<rect x="81" y="480" width="1" height="16" fill="#696969" />
<rect x="81" y="496" width="62" height="1" fill="#e3e3e3" />
<rect x="142" y="480" width="1" height="17" fill="#e3e3e3" />
<rect x="80" y="497" width="64" height="1" fill="#ffffff" />
<rect x="143" y="479" width="1" height="19" fill="#ffffff" />
<rect x="127" y="481" width="15" height="7" fill="#f0f0f0" />
<rect x="127" y="481" width="14" height="1" fill="#ffffff" />
<rect x="127" y="481" width="1" height="6" fill="#ffffff" />
<rect x="128" y="486" width="13" height="1" fill="#a0a0a0" />
<rect x="140" y="482" width="1" height="5" fill="#a0a0a0" />
<rect x="127" y="487" width="15" height="1" fill="#696969" />
<rect x="141" y="481" width="1" height="7" fill="#696969" />
<rect x="127" y="488" width="15" height="8" fill="#f0f0f0" />
<rect x="127" y="488" width="14" height="1" fill="#ffffff" />
<rect x="127" y="488" width="1" height="7" fill="#ffffff" />
<rect x="128" y="494" width="13" height="1" fill="#a0a0a0" />
<rect x="140" y="489" width="1" height="6" fill="#a0a0a0" />
<rect x="127" y="495" width="15" height="1" fill="#696969" />
<rect x="141" y="488" width="1" height="8" fill="#696969" />
<path d="M132.5 484.5 L136.5 484.5 L134.5 482.5Z" fill="#000"/>
<path d="M132.5 491.5 L136.5 491.5 L134.5 493.5Z" fill="#000"/>
<text x="84.5" y="494" font-size="12" fill="#000" textLength="28.0" lengthAdjust="spacingAndGlyphs" >7.600</text>
<text x="24.0" y="519" font-size="12" fill="#000" textLength="34.7" lengthAdjust="spacingAndGlyphs" >Omega</text>
<rect x="80" y="505" width="64" height="19" fill="#ffffff" />
<rect x="80" y="505" width="63" height="1" fill="#a0a0a0" />
<rect x="80" y="505" width="1" height="18" fill="#a0a0a0" />
<rect x="81" y="506" width="61" height="1" fill="#696969" />
<rect x="81" y="506" width="1" height="16" fill="#696969" />
<rect x="81" y="522" width="62" height="1" fill="#e3e3e3" />
<rect x="142" y="506" width="1" height="17" fill="#e3e3e3" />
<rect x="80" y="523" width="64" height="1" fill="#ffffff" />
<rect x="143" y="505" width="1" height="19" fill="#ffffff" />
<rect x="127" y="507" width="15" height="7" fill="#f0f0f0" />
<rect x="127" y="507" width="14" height="1" fill="#ffffff" />
<rect x="127" y="507" width="1" height="6" fill="#ffffff" />
<rect x="128" y="512" width="13" height="1" fill="#a0a0a0" />
<rect x="140" y="508" width="1" height="5" fill="#a0a0a0" />
<rect x="127" y="513" width="15" height="1" fill="#696969" />
<rect x="141" y="507" width="1" height="7" fill="#696969" />
<rect x="127" y="514" width="15" height="8" fill="#f0f0f0" />
<rect x="127" y="514" width="14" height="1" fill="#ffffff" />
<rect x="127" y="514" width="1" height="7" fill="#ffffff" />
<rect x="128" y="520" width="13" height="1" fill="#a0a0a0" />
<rect x="140" y="515" width="1" height="6" fill="#a0a0a0" />
<rect x="127" y="521" width="15" height="1" fill="#696969" />
<rect x="141" y="514" width="1" height="8" fill="#696969" />
<path d="M132.5 510.5 L136.5 510.5 L134.5 508.5Z" fill="#000"/>
<path d="M132.5 517.5 L136.5 517.5 L134.5 519.5Z" fill="#000"/>
<text x="84.5" y="520" font-size="12" fill="#000" textLength="33.9" lengthAdjust="spacingAndGlyphs" >180.00</text>
<text x="24.0" y="545" font-size="12" fill="#000" textLength="15.6" lengthAdjust="spacingAndGlyphs" >Chi</text>
<rect x="80" y="531" width="64" height="19" fill="#ffffff" />
<rect x="80" y="531" width="63" height="1" fill="#a0a0a0" />
<rect x="80" y="531" width="1" height="18" fill="#a0a0a0" />
<rect x="81" y="532" width="61" height="1" fill="#696969" />
<rect x="81" y="532" width="1" height="16" fill="#696969" />
<rect x="81" y="548" width="62" height="1" fill="#e3e3e3" />
<rect x="142" y="532" width="1" height="17" fill="#e3e3e3" />
<rect x="80" y="549" width="64" height="1" fill="#ffffff" />
<rect x="143" y="531" width="1" height="19" fill="#ffffff" />
<rect x="127" y="533" width="15" height="7" fill="#f0f0f0" />
<rect x="127" y="533" width="14" height="1" fill="#ffffff" />
<rect x="127" y="533" width="1" height="6" fill="#ffffff" />
<rect x="128" y="538" width="13" height="1" fill="#a0a0a0" />
<rect x="140" y="534" width="1" height="5" fill="#a0a0a0" />
<rect x="127" y="539" width="15" height="1" fill="#696969" />
<rect x="141" y="533" width="1" height="7" fill="#696969" />
<rect x="127" y="540" width="15" height="8" fill="#f0f0f0" />
<rect x="127" y="540" width="14" height="1" fill="#ffffff" />
<rect x="127" y="540" width="1" height="7" fill="#ffffff" />
<rect x="128" y="546" width="13" height="1" fill="#a0a0a0" />
<rect x="140" y="541" width="1" height="6" fill="#a0a0a0" />
<rect x="127" y="547" width="15" height="1" fill="#696969" />
<rect x="141" y="540" width="1" height="8" fill="#696969" />
<path d="M132.5 536.5 L136.5 536.5 L134.5 534.5Z" fill="#000"/>
<path d="M132.5 543.5 L136.5 543.5 L134.5 545.5Z" fill="#000"/>
<text x="84.5" y="546" font-size="12" fill="#000" textLength="22.7" lengthAdjust="spacingAndGlyphs" >0.00</text>
<text x="24.0" y="571" font-size="12" fill="#000" textLength="14.8" lengthAdjust="spacingAndGlyphs" >Phi</text>
<rect x="80" y="557" width="64" height="19" fill="#ffffff" />
<rect x="80" y="557" width="63" height="1" fill="#a0a0a0" />
<rect x="80" y="557" width="1" height="18" fill="#a0a0a0" />
<rect x="81" y="558" width="61" height="1" fill="#696969" />
<rect x="81" y="558" width="1" height="16" fill="#696969" />
<rect x="81" y="574" width="62" height="1" fill="#e3e3e3" />
<rect x="142" y="558" width="1" height="17" fill="#e3e3e3" />
<rect x="80" y="575" width="64" height="1" fill="#ffffff" />
<rect x="143" y="557" width="1" height="19" fill="#ffffff" />
<rect x="127" y="559" width="15" height="7" fill="#f0f0f0" />
<rect x="127" y="559" width="14" height="1" fill="#ffffff" />
<rect x="127" y="559" width="1" height="6" fill="#ffffff" />
<rect x="128" y="564" width="13" height="1" fill="#a0a0a0" />
<rect x="140" y="560" width="1" height="5" fill="#a0a0a0" />
<rect x="127" y="565" width="15" height="1" fill="#696969" />
<rect x="141" y="559" width="1" height="7" fill="#696969" />
<rect x="127" y="566" width="15" height="8" fill="#f0f0f0" />
<rect x="127" y="566" width="14" height="1" fill="#ffffff" />
<rect x="127" y="566" width="1" height="7" fill="#ffffff" />
<rect x="128" y="572" width="13" height="1" fill="#a0a0a0" />
<rect x="140" y="567" width="1" height="6" fill="#a0a0a0" />
<rect x="127" y="573" width="15" height="1" fill="#696969" />
<rect x="141" y="566" width="1" height="8" fill="#696969" />
<path d="M132.5 562.5 L136.5 562.5 L134.5 560.5Z" fill="#000"/>
<path d="M132.5 569.5 L136.5 569.5 L134.5 571.5Z" fill="#000"/>
<text x="84.5" y="572" font-size="12" fill="#000" textLength="22.7" lengthAdjust="spacingAndGlyphs" >0.00</text>
<text x="24.0" y="597" font-size="12" fill="#000" textLength="13.6" lengthAdjust="spacingAndGlyphs" >Dx</text>
<rect x="80" y="583" width="64" height="19" fill="#ffffff" />
<rect x="80" y="583" width="63" height="1" fill="#a0a0a0" />
<rect x="80" y="583" width="1" height="18" fill="#a0a0a0" />
<rect x="81" y="584" width="61" height="1" fill="#696969" />
<rect x="81" y="584" width="1" height="16" fill="#696969" />
<rect x="81" y="600" width="62" height="1" fill="#e3e3e3" />
<rect x="142" y="584" width="1" height="17" fill="#e3e3e3" />
<rect x="80" y="601" width="64" height="1" fill="#ffffff" />
<rect x="143" y="583" width="1" height="19" fill="#ffffff" />
<rect x="127" y="585" width="15" height="7" fill="#f0f0f0" />
<rect x="127" y="585" width="14" height="1" fill="#ffffff" />
<rect x="127" y="585" width="1" height="6" fill="#ffffff" />
<rect x="128" y="590" width="13" height="1" fill="#a0a0a0" />
<rect x="140" y="586" width="1" height="5" fill="#a0a0a0" />
<rect x="127" y="591" width="15" height="1" fill="#696969" />
<rect x="141" y="585" width="1" height="7" fill="#696969" />
<rect x="127" y="592" width="15" height="8" fill="#f0f0f0" />
<rect x="127" y="592" width="14" height="1" fill="#ffffff" />
<rect x="127" y="592" width="1" height="7" fill="#ffffff" />
<rect x="128" y="598" width="13" height="1" fill="#a0a0a0" />
<rect x="140" y="593" width="1" height="6" fill="#a0a0a0" />
<rect x="127" y="599" width="15" height="1" fill="#696969" />
<rect x="141" y="592" width="1" height="8" fill="#696969" />
<path d="M132.5 588.5 L136.5 588.5 L134.5 586.5Z" fill="#000"/>
<path d="M132.5 595.5 L136.5 595.5 L134.5 597.5Z" fill="#000"/>
<text x="84.5" y="598" font-size="12" fill="#000" textLength="22.6" lengthAdjust="spacingAndGlyphs" >1.59</text>
<text x="24.0" y="623" font-size="12" fill="#000" textLength="13.6" lengthAdjust="spacingAndGlyphs" >Dy</text>
<rect x="80" y="609" width="64" height="19" fill="#ffffff" />
<rect x="80" y="609" width="63" height="1" fill="#a0a0a0" />
<rect x="80" y="609" width="1" height="18" fill="#a0a0a0" />
<rect x="81" y="610" width="61" height="1" fill="#696969" />
<rect x="81" y="610" width="1" height="16" fill="#696969" />
<rect x="81" y="626" width="62" height="1" fill="#e3e3e3" />
<rect x="142" y="610" width="1" height="17" fill="#e3e3e3" />
<rect x="80" y="627" width="64" height="1" fill="#ffffff" />
<rect x="143" y="609" width="1" height="19" fill="#ffffff" />
<rect x="127" y="611" width="15" height="7" fill="#f0f0f0" />
<rect x="127" y="611" width="14" height="1" fill="#ffffff" />
<rect x="127" y="611" width="1" height="6" fill="#ffffff" />
<rect x="128" y="616" width="13" height="1" fill="#a0a0a0" />
<rect x="140" y="612" width="1" height="5" fill="#a0a0a0" />
<rect x="127" y="617" width="15" height="1" fill="#696969" />
<rect x="141" y="611" width="1" height="7" fill="#696969" />
<rect x="127" y="618" width="15" height="8" fill="#f0f0f0" />
<rect x="127" y="618" width="14" height="1" fill="#ffffff" />
<rect x="127" y="618" width="1" height="7" fill="#ffffff" />
<rect x="128" y="624" width="13" height="1" fill="#a0a0a0" />
<rect x="140" y="619" width="1" height="6" fill="#a0a0a0" />
<rect x="127" y="625" width="15" height="1" fill="#696969" />
<rect x="141" y="618" width="1" height="8" fill="#696969" />
<path d="M132.5 614.5 L136.5 614.5 L134.5 612.5Z" fill="#000"/>
<path d="M132.5 621.5 L136.5 621.5 L134.5 623.5Z" fill="#000"/>
<text x="84.5" y="624" font-size="12" fill="#000" textLength="22.6" lengthAdjust="spacingAndGlyphs" >0.15</text>
<rect x="169" y="377" width="13" height="13" fill="#ffffff" />
<rect x="169" y="377" width="12" height="1" fill="#a0a0a0" />
<rect x="169" y="377" width="1" height="12" fill="#a0a0a0" />
<rect x="170" y="378" width="10" height="1" fill="#696969" />
<rect x="170" y="378" width="1" height="10" fill="#696969" />
<rect x="170" y="388" width="11" height="1" fill="#e3e3e3" />
<rect x="180" y="378" width="1" height="11" fill="#e3e3e3" />
<rect x="169" y="389" width="13" height="1" fill="#ffffff" />
<rect x="181" y="377" width="1" height="13" fill="#ffffff" />
<path d="M172 383 L174.2 385.5 L179 380.2" stroke="#000" stroke-width="1.9" fill="none"/>
<text x="186.0" y="388" font-size="12" fill="#000" textLength="70.8" lengthAdjust="spacingAndGlyphs" >Antialias Items</text>
<rect x="169" y="401" width="13" height="13" fill="#ffffff" />
<rect x="169" y="401" width="12" height="1" fill="#a0a0a0" />
<rect x="169" y="401" width="1" height="12" fill="#a0a0a0" />
<rect x="170" y="402" width="10" height="1" fill="#696969" />
<rect x="170" y="402" width="1" height="10" fill="#696969" />
<rect x="170" y="412" width="11" height="1" fill="#e3e3e3" />
<rect x="180" y="402" width="1" height="11" fill="#e3e3e3" />
<rect x="169" y="413" width="13" height="1" fill="#ffffff" />
<rect x="181" y="401" width="1" height="13" fill="#ffffff" />
<path d="M172 407 L174.2 409.5 L179 404.2" stroke="#000" stroke-width="1.9" fill="none"/>
<text x="186.0" y="412" font-size="12" fill="#000" textLength="65.0" lengthAdjust="spacingAndGlyphs" >Antialias Text</text>
<text x="159.8" y="443" font-size="12" fill="#000" textLength="57.0" lengthAdjust="spacingAndGlyphs" >Show Items</text>
<rect x="219" y="438" width="83" height="1" fill="#a0a0a0" />
<rect x="219" y="439" width="83" height="1" fill="#ffffff" />
<rect x="169" y="456" width="13" height="13" fill="#ffffff" />
<rect x="169" y="456" width="12" height="1" fill="#a0a0a0" />
<rect x="169" y="456" width="1" height="12" fill="#a0a0a0" />
<rect x="170" y="457" width="10" height="1" fill="#696969" />
<rect x="170" y="457" width="1" height="10" fill="#696969" />
<rect x="170" y="467" width="11" height="1" fill="#e3e3e3" />
<rect x="180" y="457" width="1" height="11" fill="#e3e3e3" />
<rect x="169" y="468" width="13" height="1" fill="#ffffff" />
<rect x="181" y="456" width="1" height="13" fill="#ffffff" />
<path d="M172 462 L174.2 464.5 L179 459.2" stroke="#000" stroke-width="1.9" fill="none"/>
<text x="185.8" y="467" font-size="12" fill="#000" textLength="77.2" lengthAdjust="spacingAndGlyphs" >Projected Spots</text>
<rect x="169" y="480" width="13" height="13" fill="#ffffff" />
<rect x="169" y="480" width="12" height="1" fill="#a0a0a0" />
<rect x="169" y="480" width="1" height="12" fill="#a0a0a0" />
<rect x="170" y="481" width="10" height="1" fill="#696969" />
<rect x="170" y="481" width="1" height="10" fill="#696969" />
<rect x="170" y="491" width="11" height="1" fill="#e3e3e3" />
<rect x="180" y="481" width="1" height="11" fill="#e3e3e3" />
<rect x="169" y="492" width="13" height="1" fill="#ffffff" />
<rect x="181" y="480" width="1" height="13" fill="#ffffff" />
<path d="M172 486 L174.2 488.5 L179 483.2" stroke="#000" stroke-width="1.9" fill="none"/>
<text x="185.8" y="491" font-size="12" fill="#000" textLength="101.0" lengthAdjust="spacingAndGlyphs" >Spot &amp; Zone Markers</text>
<text x="168.2" y="513" font-size="12" fill="#000" textLength="22.8" lengthAdjust="spacingAndGlyphs" >label</text>
<text x="167.9" y="526" font-size="12" fill="#000" textLength="66.4" lengthAdjust="spacingAndGlyphs" >Reflections to</text>
<rect x="247" y="505" width="45" height="19" fill="#ffffff" />
<rect x="247" y="505" width="44" height="1" fill="#a0a0a0" />
<rect x="247" y="505" width="1" height="18" fill="#a0a0a0" />
<rect x="248" y="506" width="42" height="1" fill="#696969" />
<rect x="248" y="506" width="1" height="16" fill="#696969" />
<rect x="248" y="522" width="43" height="1" fill="#e3e3e3" />
<rect x="290" y="506" width="1" height="17" fill="#e3e3e3" />
<rect x="247" y="523" width="45" height="1" fill="#ffffff" />
<rect x="291" y="505" width="1" height="19" fill="#ffffff" />
<rect x="275" y="507" width="15" height="7" fill="#f0f0f0" />
<rect x="275" y="507" width="14" height="1" fill="#ffffff" />
<rect x="275" y="507" width="1" height="6" fill="#ffffff" />
<rect x="276" y="512" width="13" height="1" fill="#a0a0a0" />
<rect x="288" y="508" width="1" height="5" fill="#a0a0a0" />
<rect x="275" y="513" width="15" height="1" fill="#696969" />
<rect x="289" y="507" width="1" height="7" fill="#696969" />
<rect x="275" y="514" width="15" height="8" fill="#f0f0f0" />
<rect x="275" y="514" width="14" height="1" fill="#ffffff" />
<rect x="275" y="514" width="1" height="7" fill="#ffffff" />
<rect x="276" y="520" width="13" height="1" fill="#a0a0a0" />
<rect x="288" y="515" width="1" height="6" fill="#a0a0a0" />
<rect x="275" y="521" width="15" height="1" fill="#696969" />
<rect x="289" y="514" width="1" height="8" fill="#696969" />
<path d="M280.5 510.5 L284.5 510.5 L282.5 508.5Z" fill="#000"/>
<path d="M280.5 517.5 L284.5 517.5 L282.5 519.5Z" fill="#000"/>
<text x="251.5" y="520" font-size="12" fill="#000" textLength="8.0" lengthAdjust="spacingAndGlyphs" >3</text>
<text x="159.5" y="554" font-size="12" fill="#000" textLength="60.8" lengthAdjust="spacingAndGlyphs" >Element Size</text>
<rect x="223" y="549" width="79" height="1" fill="#a0a0a0" />
<rect x="223" y="550" width="79" height="1" fill="#ffffff" />
<text x="168.5" y="579" font-size="12" fill="#000" textLength="43.0" lengthAdjust="spacingAndGlyphs" >Text Size</text>
<rect x="226" y="565" width="66" height="19" fill="#ffffff" />
<rect x="226" y="565" width="65" height="1" fill="#a0a0a0" />
<rect x="226" y="565" width="1" height="18" fill="#a0a0a0" />
<rect x="227" y="566" width="63" height="1" fill="#696969" />
<rect x="227" y="566" width="1" height="16" fill="#696969" />
<rect x="227" y="582" width="64" height="1" fill="#e3e3e3" />
<rect x="290" y="566" width="1" height="17" fill="#e3e3e3" />
<rect x="226" y="583" width="66" height="1" fill="#ffffff" />
<rect x="291" y="565" width="1" height="19" fill="#ffffff" />
<rect x="275" y="567" width="15" height="7" fill="#f0f0f0" />
<rect x="275" y="567" width="14" height="1" fill="#ffffff" />
<rect x="275" y="567" width="1" height="6" fill="#ffffff" />
<rect x="276" y="572" width="13" height="1" fill="#a0a0a0" />
<rect x="288" y="568" width="1" height="5" fill="#a0a0a0" />
<rect x="275" y="573" width="15" height="1" fill="#696969" />
<rect x="289" y="567" width="1" height="7" fill="#696969" />
<rect x="275" y="574" width="15" height="8" fill="#f0f0f0" />
<rect x="275" y="574" width="14" height="1" fill="#ffffff" />
<rect x="275" y="574" width="1" height="7" fill="#ffffff" />
<rect x="276" y="580" width="13" height="1" fill="#a0a0a0" />
<rect x="288" y="575" width="1" height="6" fill="#a0a0a0" />
<rect x="275" y="581" width="15" height="1" fill="#696969" />
<rect x="289" y="574" width="1" height="8" fill="#696969" />
<path d="M280.5 570.5 L284.5 570.5 L282.5 568.5Z" fill="#000"/>
<path d="M280.5 577.5 L284.5 577.5 L282.5 579.5Z" fill="#000"/>
<text x="230.5" y="580" font-size="12" fill="#000" textLength="35.5" lengthAdjust="spacingAndGlyphs" >10.0 %</text>
<text x="168.5" y="605" font-size="12" fill="#000" textLength="43.9" lengthAdjust="spacingAndGlyphs" >Spot Size</text>
<rect x="226" y="591" width="66" height="19" fill="#ffffff" />
<rect x="226" y="591" width="65" height="1" fill="#a0a0a0" />
<rect x="226" y="591" width="1" height="18" fill="#a0a0a0" />
<rect x="227" y="592" width="63" height="1" fill="#696969" />
<rect x="227" y="592" width="1" height="16" fill="#696969" />
<rect x="227" y="608" width="64" height="1" fill="#e3e3e3" />
<rect x="290" y="592" width="1" height="17" fill="#e3e3e3" />
<rect x="226" y="609" width="66" height="1" fill="#ffffff" />
<rect x="291" y="591" width="1" height="19" fill="#ffffff" />
<rect x="275" y="593" width="15" height="7" fill="#f0f0f0" />
<rect x="275" y="593" width="14" height="1" fill="#ffffff" />
<rect x="275" y="593" width="1" height="6" fill="#ffffff" />
<rect x="276" y="598" width="13" height="1" fill="#a0a0a0" />
<rect x="288" y="594" width="1" height="5" fill="#a0a0a0" />
<rect x="275" y="599" width="15" height="1" fill="#696969" />
<rect x="289" y="593" width="1" height="7" fill="#696969" />
<rect x="275" y="600" width="15" height="8" fill="#f0f0f0" />
<rect x="275" y="600" width="14" height="1" fill="#ffffff" />
<rect x="275" y="600" width="1" height="7" fill="#ffffff" />
<rect x="276" y="606" width="13" height="1" fill="#a0a0a0" />
<rect x="288" y="601" width="1" height="6" fill="#a0a0a0" />
<rect x="275" y="607" width="15" height="1" fill="#696969" />
<rect x="289" y="600" width="1" height="8" fill="#696969" />
<path d="M280.5 596.5 L284.5 596.5 L282.5 594.5Z" fill="#000"/>
<path d="M280.5 603.5 L284.5 603.5 L282.5 605.5Z" fill="#000"/>
<text x="230.5" y="606" font-size="12" fill="#000" textLength="29.9" lengthAdjust="spacingAndGlyphs" >1.0 %</text>
<text x="158.9" y="638" font-size="12" fill="#000" textLength="35.3" lengthAdjust="spacingAndGlyphs" >max Q:</text>
<rect x="209" y="626" width="93" height="20" fill="#f0f0f0" />
<rect x="209" y="626" width="92" height="1" fill="#a0a0a0" />
<rect x="209" y="626" width="1" height="19" fill="#a0a0a0" />
<rect x="210" y="627" width="90" height="1" fill="#000" />
<rect x="210" y="627" width="1" height="17" fill="#000" />
<rect x="210" y="644" width="91" height="1" fill="#e3e3e3" />
<rect x="300" y="627" width="1" height="18" fill="#e3e3e3" />
<rect x="209" y="645" width="93" height="1" fill="#ffffff" />
<rect x="301" y="626" width="1" height="20" fill="#ffffff" />
<text x="213.5" y="640" font-size="12" fill="#6d6d6d" textLength="47.9" lengthAdjust="spacingAndGlyphs" >15.00 keV</text>
<rect x="209" y="652" width="93" height="19" fill="#f0f0f0" />
<rect x="209" y="652" width="92" height="1" fill="#a0a0a0" />
<rect x="209" y="652" width="1" height="18" fill="#a0a0a0" />
<rect x="210" y="653" width="90" height="1" fill="#000" />
<rect x="210" y="653" width="1" height="16" fill="#000" />
<rect x="210" y="669" width="91" height="1" fill="#e3e3e3" />
<rect x="300" y="653" width="1" height="17" fill="#e3e3e3" />
<rect x="209" y="670" width="93" height="1" fill="#ffffff" />
<rect x="301" y="652" width="1" height="19" fill="#ffffff" />
<text x="213.5" y="666" font-size="12" fill="#6d6d6d" textLength="32.1" lengthAdjust="spacingAndGlyphs" >0.83 A</text>
<rect x="16" y="649" width="138" height="23" fill="#f0f0f0" />
<rect x="16" y="649" width="137" height="1" fill="#ffffff" />
<rect x="16" y="649" width="1" height="22" fill="#ffffff" />
<rect x="17" y="670" width="136" height="1" fill="#a0a0a0" />
<rect x="152" y="650" width="1" height="21" fill="#a0a0a0" />
<rect x="16" y="671" width="138" height="1" fill="#696969" />
<rect x="153" y="649" width="1" height="23" fill="#696969" />
<text x="31.8" y="665" font-size="12" fill="#000" textLength="105.7" lengthAdjust="spacingAndGlyphs" >Use Config as Default</text>
<rect x="477" y="51" width="867" height="638" fill="#f0f0f0" />
<rect x="477" y="51" width="1" height="638" fill="#ffffff" />
<rect x="478" y="51" width="1" height="638" fill="#ffffff" />
<rect x="477" y="51" width="867" height="1" fill="#ffffff" />
<rect x="477" y="52" width="867" height="1" fill="#ffffff" />
<rect x="477" y="688" width="867" height="1" fill="#a0a0a0" />
<rect x="1343" y="51" width="1" height="638" fill="#a0a0a0" />
<linearGradient id="tgl" x1="0" x2="1" y1="0" y2="0"><stop offset="0" stop-color="#99b4d1"/><stop offset="1" stop-color="#b9d1ea"/></linearGradient>
<rect x="481" y="56" width="860" height="22" fill="url(#tgl)" />
<g transform="translate(483,58) scale(0.75)"><radialGradient id="lig" cx="0.5" cy="0.5" r="0.62"><stop offset="0" stop-color="#d8d8d8"/><stop offset="0.55" stop-color="#707070"/><stop offset="1" stop-color="#1c1c1c"/></radialGradient><rect x="0" y="0" width="24" height="24" fill="url(#lig)"/><g stroke="#3a8a3a" stroke-width="0.9" stroke-dasharray="1.2 1.2" fill="none"><path d="M11.3 1 V23.5 M0.5 12.5 H23.5 M1.5 2.3 Q11.3 7.5 21.7 2.5 M2 22.3 Q11.3 17.5 22.3 22.5"/></g><g fill="#f0f8f0"><rect x="0.8" y="1.5999999999999999" width="1.5" height="1.5"/><rect x="5.3" y="3.8" width="1.5" height="1.5"/><rect x="16.3" y="3.8" width="1.5" height="1.5"/><rect x="21.0" y="1.8" width="1.5" height="1.5"/><rect x="0.8" y="11.8" width="1.5" height="1.5"/><rect x="10.600000000000001" y="11.8" width="1.5" height="1.5"/><rect x="16.1" y="11.8" width="1.5" height="1.5"/><rect x="20.6" y="11.8" width="1.5" height="1.5"/><rect x="5.3" y="11.8" width="1.5" height="1.5"/><rect x="10.600000000000001" y="8.3" width="1.5" height="1.5"/><rect x="10.600000000000001" y="15.3" width="1.5" height="1.5"/><rect x="5.8" y="18.900000000000002" width="1.5" height="1.5"/><rect x="10.600000000000001" y="18.8" width="1.5" height="1.5"/><rect x="16.8" y="19.900000000000002" width="1.5" height="1.5"/><rect x="1.3" y="21.6" width="1.5" height="1.5"/><rect x="21.6" y="21.8" width="1.5" height="1.5"/><rect x="11.0" y="21.8" width="1.5" height="1.5"/><rect x="10.600000000000001" y="4.1" width="1.5" height="1.5"/></g></g>
<text x="503.2" y="71" font-size="12" fill="#000" textLength="178.3" lengthAdjust="spacingAndGlyphs" >Laue Plane: SI111-10S-scaled.bmp</text>
<rect x="1280" y="58" width="18" height="18" fill="#f0f0f0" />
<rect x="1280" y="58" width="17" height="1" fill="#ffffff" />
<rect x="1280" y="58" width="1" height="17" fill="#ffffff" />
<rect x="1281" y="74" width="16" height="1" fill="#a0a0a0" />
<rect x="1296" y="59" width="1" height="16" fill="#a0a0a0" />
<rect x="1280" y="75" width="18" height="1" fill="#696969" />
<rect x="1297" y="58" width="1" height="18" fill="#696969" />
<rect x="1285" y="69" width="7" height="2" fill="#000" />
<rect x="1300" y="58" width="18" height="18" fill="#f0f0f0" />
<rect x="1300" y="58" width="17" height="1" fill="#ffffff" />
<rect x="1300" y="58" width="1" height="17" fill="#ffffff" />
<rect x="1301" y="74" width="16" height="1" fill="#a0a0a0" />
<rect x="1316" y="59" width="1" height="16" fill="#a0a0a0" />
<rect x="1300" y="75" width="18" height="1" fill="#696969" />
<rect x="1317" y="58" width="1" height="18" fill="#696969" />
<rect x="1304.5" y="62.5" width="8" height="8" fill="none" stroke="#000"/>
<rect x="1304" y="62" width="9" height="2" fill="#000" />
<rect x="1320" y="58" width="18" height="18" fill="#f0f0f0" />
<rect x="1320" y="58" width="17" height="1" fill="#ffffff" />
<rect x="1320" y="58" width="1" height="17" fill="#ffffff" />
<rect x="1321" y="74" width="16" height="1" fill="#a0a0a0" />
<rect x="1336" y="59" width="1" height="16" fill="#a0a0a0" />
<rect x="1320" y="75" width="18" height="1" fill="#696969" />
<rect x="1337" y="58" width="1" height="18" fill="#696969" />
<path d="M1325 63 L1332 70 M1332 63 L1325 70" stroke="#000" stroke-width="1.6" fill="none"/>
<rect x="488" y="82" width="2" height="25" fill="#ffffff" />
<rect x="490" y="82" width="1" height="26" fill="#a0a0a0" />
<rect x="491" y="82" width="2" height="25" fill="#ffffff" />
<rect x="493" y="82" width="1" height="26" fill="#a0a0a0" />
<rect x="488" y="107" width="6" height="1" fill="#a0a0a0" />
<g transform="translate(500,83)"><radialGradient id="mgg" cx="0.35" cy="0.3" r="0.7"><stop offset="0" stop-color="#ffffff"/><stop offset="0.6" stop-color="#d4dde6"/><stop offset="1" stop-color="#a8b6c6"/></radialGradient><linearGradient id="mgh" x1="0" y1="0" x2="1" y2="1"><stop offset="0" stop-color="#f8d870"/><stop offset="1" stop-color="#d89020"/></linearGradient><path d="M14.5 14 L22.5 21.5" stroke="#b07818" stroke-width="4.4" stroke-linecap="round"/><path d="M14.5 14 L22.5 21.5" stroke="url(#mgh)" stroke-width="3.2" stroke-linecap="round"/><circle cx="8.5" cy="8.5" r="7.6" fill="url(#mgg)" stroke="#8a98b8" stroke-width="1.1"/></g>
<g transform="translate(532.5,84.5) scale(1.0)" fill="#000"><path d="M10.5 0 L15 5 L12.2 5 L12.2 8.8 L16 8.8 L16 6 L21 10.5 L16 15 L16 12.2 L12.2 12.2 L12.2 16 L15 16 L10.5 21 L6 16 L8.8 16 L8.8 12.2 L5 12.2 L5 15 L0 10.5 L5 6 L5 8.8 L8.8 8.8 L8.8 5 L6 5 Z"/></g>
<g transform="translate(563,82) scale(1.0)"><path d="M10.7 6.6 A8.4 8.4 0 1 0 19.1 14.2" fill="none" stroke="#000" stroke-width="3.1"/><path d="M10.8 0.8 L17.6 6.8 L11.2 12.8 Z" fill="#000"/></g>
<rect x="590" y="80" width="30" height="28" fill="#f4f4f4" />
<rect x="590" y="80" width="30" height="1" fill="#a0a0a0" />
<rect x="590" y="80" width="1" height="28" fill="#a0a0a0" />
<rect x="590" y="107" width="30" height="1" fill="#ffffff" />
<rect x="619" y="80" width="1" height="28" fill="#ffffff" />
<g transform="translate(594,84)"><radialGradient id="zmg" cx="0.5" cy="0.5" r="0.62"><stop offset="0" stop-color="#d8d8d8"/><stop offset="0.55" stop-color="#707070"/><stop offset="1" stop-color="#1c1c1c"/></radialGradient><rect x="0" y="0" width="24" height="24" fill="url(#zmg)"/><g stroke="#3a8a3a" stroke-width="0.7" stroke-dasharray="1 1" fill="none"><path d="M11.3 1 V23.5 M0.5 12.5 H23.5 M1.5 2.3 Q11.3 7.5 21.7 2.5 M2 22.3 Q11.3 17.5 22.3 22.5"/></g><g fill="#f0f8f0"><rect x="0.9" y="1.6999999999999997" width="1.3" height="1.3"/><rect x="5.4" y="3.9" width="1.3" height="1.3"/><rect x="16.4" y="3.9" width="1.3" height="1.3"/><rect x="21.099999999999998" y="1.9" width="1.3" height="1.3"/><rect x="0.9" y="11.9" width="1.3" height="1.3"/><rect x="10.700000000000001" y="11.9" width="1.3" height="1.3"/><rect x="16.2" y="11.9" width="1.3" height="1.3"/><rect x="20.7" y="11.9" width="1.3" height="1.3"/><rect x="10.700000000000001" y="8.4" width="1.3" height="1.3"/><rect x="10.700000000000001" y="15.4" width="1.3" height="1.3"/><rect x="5.9" y="19.0" width="1.3" height="1.3"/><rect x="10.700000000000001" y="18.9" width="1.3" height="1.3"/><rect x="16.9" y="20.0" width="1.3" height="1.3"/><rect x="1.4" y="21.7" width="1.3" height="1.3"/><rect x="21.7" y="21.9" width="1.3" height="1.3"/><rect x="11.1" y="21.9" width="1.3" height="1.3"/></g><path d="M0 18.8 Q8 15.5 10.5 9.5 Q12.3 5 13.6 0" stroke="#f4a018" stroke-width="2.5" fill="none"/></g>
<rect x="624" y="82" width="1" height="25" fill="#a0a0a0" />
<rect x="625" y="82" width="1" height="25" fill="#ffffff" />
<g transform="translate(632,83)"><linearGradient id="flg" x1="0" y1="0" x2="1" y2="0"><stop offset="0" stop-color="#ff2a20"/><stop offset="0.25" stop-color="#ff6050"/><stop offset="0.45" stop-color="#e02a1a"/><stop offset="1" stop-color="#a00808"/></linearGradient><path d="M1.8 1.5 L2.6 23.5" stroke="#d4d8dc" stroke-width="1.1"/><path d="M1.4 1.8 Q6 0.2 11 1.6 Q15.5 3 19.5 2.3 L21 15.8 Q16 17 11.5 15.3 Q6.5 13.4 2.6 14.8 Z" fill="url(#flg)"/></g>
<rect x="658" y="80" width="30" height="28" fill="#f8f8f8" />
<rect x="658" y="80" width="30" height="1" fill="#a0a0a0" />
<rect x="658" y="80" width="1" height="28" fill="#a0a0a0" />
<rect x="658" y="107" width="30" height="1" fill="#ffffff" />
<rect x="687" y="80" width="1" height="28" fill="#ffffff" />
<g transform="translate(662,83.5)"><radialGradient id="ifg" cx="0.4" cy="0.25" r="0.8"><stop offset="0" stop-color="#8cc4f4"/><stop offset="0.5" stop-color="#2a78d0"/><stop offset="1" stop-color="#1850a0"/></radialGradient><circle cx="12" cy="12" r="11.5" fill="url(#ifg)" stroke="#6a90c8" stroke-width="0.8"/><path d="M2 10 A10 8 0 0 1 22 10 Q12 14 2 10Z" fill="#fff" opacity="0.35"/><circle cx="12" cy="6.3" r="2" fill="#fff"/><path d="M9.5 9.5 L13.5 9.5 L13.5 17.5 L15 17.5 L15 19 L9.5 19 L9.5 17.5 L11 17.5 L11 11 L9.5 11 Z" fill="#fff"/></g>
<rect x="692" y="82" width="1" height="25" fill="#a0a0a0" />
<rect x="693" y="82" width="1" height="25" fill="#ffffff" />
<g transform="translate(701,83)"><linearGradient id="fldb" x1="0" y1="0" x2="1" y2="1"><stop offset="0" stop-color="#e8f2fc"/><stop offset="1" stop-color="#6aa2d8"/></linearGradient><linearGradient id="fldw" x1="0" y1="0" x2="0" y2="1"><stop offset="0" stop-color="#ffffff"/><stop offset="1" stop-color="#e6e6e6"/></linearGradient><radialGradient id="fsh" cx="0.5" cy="0.5" r="0.5"><stop offset="0" stop-color="#000" stop-opacity="0.35"/><stop offset="1" stop-color="#000" stop-opacity="0"/></radialGradient><ellipse cx="7" cy="19.5" rx="7.5" ry="3.5" fill="url(#fsh)"/><path d="M5 1 L15 1 L15 21 L5 20 Z" fill="url(#fldw)" stroke="#c8c8c8" stroke-width="0.6"/><path d="M1 15 L5 13 L15 14 L15 21 L4 21 Z" fill="#f4f4f4" opacity="0.9"/><path d="M15 1 L20 0 L20 18 L15 22 Z" fill="url(#fldb)"/></g>
<g transform="translate(730.5,84.5)"><radialGradient id="xcg" cx="0.45" cy="0.35" r="0.7"><stop offset="0" stop-color="#7a7e98"/><stop offset="1" stop-color="#3c4060"/></radialGradient><circle cx="10.5" cy="10.5" r="10.2" fill="url(#xcg)" stroke="#30344c" stroke-width="0.6"/><path d="M6.2 6.2 L14.8 14.8 M14.8 6.2 L6.2 14.8" stroke="#fff" stroke-width="2.6"/></g>
<g transform="translate(756,78)"><linearGradient id="prb" x1="0" y1="0" x2="0" y2="1"><stop offset="0" stop-color="#f8f8fa"/><stop offset="0.6" stop-color="#e0e0e6"/><stop offset="1" stop-color="#b8b8c4"/></linearGradient><linearGradient id="prp" x1="0" y1="0" x2="0" y2="1"><stop offset="0" stop-color="#ffffff"/><stop offset="1" stop-color="#e8ecf2"/></linearGradient><linearGradient id="prl" x1="0" y1="0" x2="0" y2="1"><stop offset="0" stop-color="#a8d4fc"/><stop offset="0.5" stop-color="#1a8af0"/><stop offset="1" stop-color="#0a6ae0"/></linearGradient><path d="M4.3 16 Q4.3 12.8 8 12.8 L24.3 12.8 Q27.9 12.8 27.9 16 L27.9 23.5 Q27.9 26.3 25 26.3 L7.2 26.3 Q4.3 26.3 4.3 23.5 Z" fill="url(#prb)" stroke="#9898a8" stroke-width="0.8"/><rect x="10.5" y="5.2" width="10.8" height="10" fill="url(#prp)" stroke="#b0b4c4" stroke-width="0.7"/><path d="M9.5 14.8 L22.1 14.8 L22.6 20.5 Q16 21.5 9.2 20.5 Z" fill="url(#prl)"/><rect x="8.5" y="21.9" width="15" height="2" rx="0.8" fill="#3a3a40"/><rect x="8" y="23.8" width="16.3" height="4.8" fill="url(#prp)" stroke="#c0c4d0" stroke-width="0.6"/><circle cx="24.3" cy="16.3" r="0.6" fill="#40a080"/></g>
<g transform="translate(790,78) scale(1.0)"><linearGradient id="wrs" x1="0" y1="0" x2="1" y2="1"><stop offset="0" stop-color="#ffffff"/><stop offset="0.6" stop-color="#dcdce4"/><stop offset="1" stop-color="#b0b0c0"/></linearGradient><linearGradient id="wro" x1="0" y1="0" x2="1" y2="1"><stop offset="0" stop-color="#ffd838"/><stop offset="1" stop-color="#f08800"/></linearGradient><path d="M11.2 19.8 L19.2 27.8 A3.25 3.25 0 0 0 23.8 23.2 L15.8 15.2 Z" fill="url(#wro)" stroke="#c87810" stroke-width="0.7"/><circle cx="21" cy="24.2" r="1.2" fill="#f8b030" stroke="#e08818" stroke-width="0.6"/><path d="M7.5 5.3 L10.8 10 L6 14 L1.2 10 A7.6 7.6 0 1 0 7.5 5.3 Z" fill="url(#wrs)" stroke="#8a8aaa" stroke-width="0.9" stroke-linejoin="round"/></g>
<rect x="485" y="111" width="852" height="1" fill="#a0a0a0" />
<rect x="485" y="112" width="852" height="1" fill="#ffffff" />
<rect x="489" y="115" width="26" height="2" fill="#ffffff" />
<rect x="489" y="117" width="27" height="1" fill="#a0a0a0" />
<rect x="489" y="118" width="26" height="2" fill="#ffffff" />
<rect x="489" y="120" width="27" height="1" fill="#a0a0a0" />
<rect x="515" y="115" width="1" height="6" fill="#a0a0a0" />
<g transform="translate(491,128)"><path d="M1 5 L14 0.5 L20.5 18 L7 22.5 Z" fill="#f6f8fc" stroke="#b4bccc" stroke-width="0.6"/><g stroke="#4a78c8" stroke-width="0.6" fill="none"><path d="M3.5 6 Q5 4.5 6.5 5.5 Q8 4 9.5 4.5 M4.5 9.5 Q6 8 8 9 Q9.5 7.5 11 8 M5.5 13 Q7 12 8.5 12.5 M6.5 16.5 Q8 15.5 9.5 16 M8.5 20 Q11 19 13 18.5 M14 16 Q16 15.5 17 16"/></g><linearGradient id="rlg" x1="0" y1="0" x2="1" y2="1"><stop offset="0" stop-color="#f4d878"/><stop offset="1" stop-color="#c89428"/></linearGradient><path d="M5.6 15.2 L19 3.6 L22.4 7.6 L9 19.2 Z" fill="url(#rlg)" stroke="#a87a20" stroke-width="0.6"/><g stroke="#9a7020" stroke-width="0.5"><path d="M9 13.3 L10 14.5 M11.5 11.2 L12.5 12.4 M14 9 L15 10.2 M16.5 6.8 L17.5 8"/></g></g>
<g transform="translate(490.5,156.5)"><rect x="0.75" y="0.75" width="22" height="22.5" rx="1" fill="#f6f6f6" stroke="#a8a8a8" stroke-width="1.5"/><g stroke="#dedede" stroke-width="0.7"><path d="M6 2 V22 M11.5 2 V22 M17 2 V22 M2 6.5 H21.5 M2 12 H21.5 M2 17.5 H21.5"/></g><path d="M3 21.5 C5 12 9 8.5 13 9 S19 10 21 10.5" stroke="#e06050" stroke-width="1.3" fill="none"/><path d="M2 9.5 C5 15 9 16.5 12 12 S17 3.5 21 4.5" stroke="#40a048" stroke-width="1.3" fill="none"/><path d="M2 3.5 C7 1.5 10 5 12 9.5 S17 16 21 15.5" stroke="#3a90d8" stroke-width="1.3" fill="none"/></g>
<g transform="translate(489,187)"><path d="M7.5 1 L12.5 10.8" stroke="#a0a4aa" stroke-width="1.5" stroke-linecap="round"/><path d="M1 6.2 L12 10.8" stroke="#b8bcc2" stroke-width="1.2" stroke-linecap="round"/><path d="M11.5 10.5 L19.2 12" stroke="#181818" stroke-width="1.5"/><path d="M11.8 10.8 L15.5 16.5" stroke="#181818" stroke-width="1.5"/><ellipse cx="21.5" cy="12.5" rx="2.5" ry="2" fill="none" stroke="#181818" stroke-width="1.5"/><ellipse cx="16.8" cy="18.8" rx="1.8" ry="3" transform="rotate(-30 16.8 18.8)" fill="none" stroke="#181818" stroke-width="1.5"/><circle cx="11.8" cy="10.5" r="0.9" fill="#e02020"/></g>
<g transform="translate(491,216.5) scale(1.0)"><path d="M10.7 6.6 A8.4 8.4 0 1 0 19.1 14.2" fill="none" stroke="#000" stroke-width="3.1"/><path d="M10.8 0.8 L17.6 6.8 L11.2 12.8 Z" fill="#000"/></g>
<g transform="translate(512.9,246.5) scale(-1.0,1.0)"><path d="M10.7 6.6 A8.4 8.4 0 1 0 19.1 14.2" fill="none" stroke="#000" stroke-width="3.1"/><path d="M10.8 0.8 L17.6 6.8 L11.2 12.8 Z" fill="#000"/></g>
<g transform="translate(491,282.3) scale(1.0)" fill="#000"><path d="M0 6.5 L6.5 0 L6.5 4.8 L15.5 4.8 L15.5 0 L22 6.5 L15.5 13 L15.5 8.2 L6.5 8.2 L6.5 13 Z"/></g>
<g transform="translate(496,307) scale(1.0)" fill="#000"><path d="M6 0 L12 6.5 L7.7 6.5 L7.7 16.5 L12 16.5 L6 23 L0 16.5 L4.3 16.5 L4.3 6.5 L0 6.5 Z"/></g>
<rect x="519" y="112" width="1" height="570" fill="#a0a0a0" />
<rect x="520" y="112" width="1" height="570" fill="#ffffff" />
<rect x="485" y="681" width="35" height="1" fill="#a0a0a0" />
<rect x="521" y="123" width="815" height="1" fill="#a0a0a0" />
<rect x="521" y="123" width="1" height="545" fill="#a0a0a0" />
<rect x="521" y="667" width="815" height="1" fill="#ffffff" />
<rect x="521" y="668" width="815" height="1" fill="#ffffff" />
<rect x="1335" y="123" width="1" height="546" fill="#ffffff" />
<defs>
<clipPath id="imgclip"><rect x="522" y="124" width="812" height="543"/></clipPath>
<radialGradient id="lg1" gradientUnits="userSpaceOnUse" cx="938.2" cy="394.8" r="470"><stop offset="0" stop-color="#8c8c8c"/><stop offset="0.1" stop-color="#848484"/><stop offset="0.23" stop-color="#686868"/><stop offset="0.36" stop-color="#4a4a4a"/><stop offset="0.46" stop-color="#323232"/><stop offset="0.55" stop-color="#232323"/><stop offset="0.64" stop-color="#1a1a1a"/><stop offset="0.8" stop-color="#111111"/><stop offset="1" stop-color="#0a0a0a"/></radialGradient>
<linearGradient id="vfade" x1="0" y1="0" x2="0" y2="1"><stop offset="0" stop-color="#fff" stop-opacity="1"/><stop offset="0.75" stop-color="#fff" stop-opacity="0.6"/><stop offset="1" stop-color="#fff" stop-opacity="0"/></linearGradient>
<filter id="nz" x="0" y="0" width="1" height="1" color-interpolation-filters="sRGB"><feTurbulence type="fractalNoise" baseFrequency="0.2" numOctaves="3" seed="11" result="t"/><feColorMatrix in="t" type="matrix" values="0.5 0 0 0 0.25  0.5 0 0 0 0.25  0.5 0 0 0 0.25  0 0 0 0 1" result="g0"/><feComponentTransfer in="g0" result="g"><feFuncR type="gamma" amplitude="1" exponent="1.2" offset="0"/><feFuncG type="gamma" amplitude="1" exponent="1.2" offset="0"/><feFuncB type="gamma" amplitude="1" exponent="1.2" offset="0"/></feComponentTransfer><feComposite in="SourceGraphic" in2="g" operator="arithmetic" k1="2.29" k2="0" k3="0" k4="0"/></filter>
<filter id="blr" x="-1" y="-1" width="3" height="3"><feGaussianBlur stdDeviation="2.5"/></filter>
<filter id="blr2" x="-1" y="-1" width="3" height="3"><feGaussianBlur stdDeviation="2.2"/></filter>
<filter id="blr3" x="-0.5" y="-0.5" width="2" height="2"><feGaussianBlur stdDeviation="5"/></filter>
</defs>
<g clip-path="url(#imgclip)">
<rect x="522" y="124" width="812" height="543" fill="#000" />
<g filter="url(#nz)">
<rect x="522" y="124" width="812" height="543" fill="url(#lg1)"/>
<g filter="url(#blr3)">
<rect x="929" y="120" width="24" height="230" fill="#000" opacity="0.55"/>
<rect x="886" y="150" width="24" height="230" fill="#fff" opacity="0.13"/>
<rect x="972" y="150" width="20" height="230" fill="#fff" opacity="0.13"/>
</g>
<circle cx="982.9" cy="182.2" r="5.5" fill="#fff" opacity="0.69" filter="url(#blr2)"/>
<circle cx="998.9" cy="193.6" r="5.5" fill="#fff" opacity="0.46" filter="url(#blr2)"/>
<circle cx="1008.4" cy="160.5" r="5.5" fill="#fff" opacity="0.46" filter="url(#blr2)"/>
<circle cx="1041.5" cy="221.4" r="5.5" fill="#fff" opacity="1.00" filter="url(#blr2)"/>
<circle cx="1105.5" cy="253.7" r="5.5" fill="#fff" opacity="0.69" filter="url(#blr2)"/>
<circle cx="1088.4" cy="246.1" r="5.5" fill="#fff" opacity="0.46" filter="url(#blr2)"/>
<circle cx="1146.6" cy="221.4" r="5.5" fill="#fff" opacity="0.46" filter="url(#blr2)"/>
<circle cx="1079.6" cy="276.6" r="5.5" fill="#fff" opacity="0.52" filter="url(#blr2)"/>
<circle cx="1165.6" cy="322.3" r="5.5" fill="#fff" opacity="0.63" filter="url(#blr2)"/>
<circle cx="1226.2" cy="302.4" r="5.5" fill="#fff" opacity="0.57" filter="url(#blr2)"/>
<circle cx="1079.6" cy="347.0" r="5.5" fill="#fff" opacity="0.63" filter="url(#blr2)"/>
<circle cx="1032.4" cy="340.5" r="5.5" fill="#fff" opacity="1.00" filter="url(#blr2)"/>
<circle cx="1099.8" cy="303.3" r="5.5" fill="#fff" opacity="0.69" filter="url(#blr2)"/>
<circle cx="974.2" cy="213.8" r="5.5" fill="#fff" opacity="0.52" filter="url(#blr2)"/>
<circle cx="1198.8" cy="137.6" r="5.5" fill="#fff" opacity="0.40" filter="url(#blr2)"/>
<circle cx="764.3" cy="236.0" r="5.5" fill="#fff" opacity="0.63" filter="url(#blr2)"/>
<circle cx="826.3" cy="293.6" r="5.5" fill="#fff" opacity="0.80" filter="url(#blr2)"/>
<circle cx="811.7" cy="278.9" r="5.5" fill="#fff" opacity="0.52" filter="url(#blr2)"/>
<circle cx="729.9" cy="315.6" r="5.5" fill="#fff" opacity="0.63" filter="url(#blr2)"/>
<circle cx="761.5" cy="326.3" r="5.5" fill="#fff" opacity="0.46" filter="url(#blr2)"/>
<circle cx="891.2" cy="309.9" r="5.5" fill="#fff" opacity="1.00" filter="url(#blr2)"/>
<circle cx="879.9" cy="291.6" r="5.5" fill="#fff" opacity="0.92" filter="url(#blr2)"/>
<circle cx="861.6" cy="254.9" r="5.5" fill="#fff" opacity="0.92" filter="url(#blr2)"/>
<circle cx="843.3" cy="332.5" r="5.5" fill="#fff" opacity="0.98" filter="url(#blr2)"/>
<circle cx="777.0" cy="294.4" r="5.5" fill="#fff" opacity="0.69" filter="url(#blr2)"/>
<circle cx="799.6" cy="340.9" r="5.5" fill="#fff" opacity="0.52" filter="url(#blr2)"/>
<circle cx="902.9" cy="543.7" r="5.5" fill="#fff" opacity="0.69" filter="url(#blr2)"/>
<circle cx="899.2" cy="563.5" r="5.5" fill="#fff" opacity="0.63" filter="url(#blr2)"/>
<circle cx="883.8" cy="632.3" r="5.5" fill="#fff" opacity="0.57" filter="url(#blr2)"/>
<circle cx="967.4" cy="584.6" r="5.5" fill="#fff" opacity="0.63" filter="url(#blr2)"/>
<circle cx="974.9" cy="619.4" r="5.5" fill="#fff" opacity="0.57" filter="url(#blr2)"/>
<circle cx="993.5" cy="608.2" r="5.5" fill="#fff" opacity="0.52" filter="url(#blr2)"/>
<circle cx="957.5" cy="525.1" r="5.5" fill="#fff" opacity="0.57" filter="url(#blr2)"/>
<circle cx="1077.9" cy="522.6" r="5.5" fill="#fff" opacity="0.52" filter="url(#blr2)"/>
<circle cx="1087.8" cy="557.3" r="5.5" fill="#fff" opacity="0.52" filter="url(#blr2)"/>
<circle cx="802.3" cy="504.0" r="5.5" fill="#fff" opacity="0.57" filter="url(#blr2)"/>
<circle cx="931.4" cy="506.4" r="5.5" fill="#fff" opacity="0.92" filter="url(#blr2)"/>
<circle cx="864.4" cy="510.2" r="5.5" fill="#fff" opacity="0.92" filter="url(#blr2)"/>
<circle cx="849.5" cy="530.0" r="5.5" fill="#fff" opacity="0.80" filter="url(#blr2)"/>
<circle cx="826.0" cy="572.3" r="5.5" fill="#fff" opacity="0.80" filter="url(#blr2)"/>
<circle cx="1018.3" cy="542.4" r="5.5" fill="#fff" opacity="0.80" filter="url(#blr2)"/>
<circle cx="1073.0" cy="639.3" r="5.5" fill="#fff" opacity="0.69" filter="url(#blr2)"/>
<circle cx="1164.8" cy="480.5" r="5.5" fill="#fff" opacity="0.57" filter="url(#blr2)"/>
<circle cx="1232.8" cy="506.1" r="5.5" fill="#fff" opacity="0.63" filter="url(#blr2)"/>
<circle cx="1218.0" cy="471.2" r="5.5" fill="#fff" opacity="0.46" filter="url(#blr2)"/>
<circle cx="1289.0" cy="491.3" r="5.5" fill="#fff" opacity="0.46" filter="url(#blr2)"/>
<circle cx="1252.6" cy="541.6" r="5.5" fill="#fff" opacity="0.40" filter="url(#blr2)"/>
<circle cx="1200.3" cy="516.9" r="5.5" fill="#fff" opacity="0.34" filter="url(#blr2)"/>
<circle cx="1150.8" cy="439.5" r="5.5" fill="#fff" opacity="0.34" filter="url(#blr2)"/>
<circle cx="725.6" cy="350.1" r="5.5" fill="#fff" opacity="0.34" filter="url(#blr2)"/>
<circle cx="893.5" cy="607.4" r="5.5" fill="#fff" opacity="0.34" filter="url(#blr2)"/>
<circle cx="1139.4" cy="455.5" r="5.5" fill="#fff" opacity="0.23" filter="url(#blr2)"/>
<circle cx="737.0" cy="334.1" r="5.5" fill="#fff" opacity="0.23" filter="url(#blr2)"/>
<circle cx="877.5" cy="596.0" r="5.5" fill="#fff" opacity="0.23" filter="url(#blr2)"/>
<circle cx="1172.5" cy="465.0" r="5.5" fill="#fff" opacity="0.23" filter="url(#blr2)"/>
<circle cx="703.9" cy="324.6" r="5.5" fill="#fff" opacity="0.23" filter="url(#blr2)"/>
<circle cx="868.0" cy="629.1" r="5.5" fill="#fff" opacity="0.23" filter="url(#blr2)"/>
<circle cx="1111.6" cy="498.1" r="5.5" fill="#fff" opacity="0.52" filter="url(#blr2)"/>
<circle cx="797.1" cy="227.5" r="5.5" fill="#fff" opacity="0.34" filter="url(#blr2)"/>
<circle cx="770.9" cy="535.9" r="5.5" fill="#fff" opacity="0.34" filter="url(#blr2)"/>
<circle cx="789.5" cy="244.6" r="5.5" fill="#fff" opacity="0.23" filter="url(#blr2)"/>
<circle cx="788.0" cy="543.5" r="5.5" fill="#fff" opacity="0.23" filter="url(#blr2)"/>
<circle cx="1111.6" cy="603.2" r="5.5" fill="#fff" opacity="0.23" filter="url(#blr2)"/>
<circle cx="764.8" cy="186.4" r="5.5" fill="#fff" opacity="0.23" filter="url(#blr2)"/>
<circle cx="729.8" cy="568.2" r="5.5" fill="#fff" opacity="0.23" filter="url(#blr2)"/>
<circle cx="1056.4" cy="536.2" r="5.5" fill="#fff" opacity="0.26" filter="url(#blr2)"/>
<circle cx="820.0" cy="253.4" r="5.5" fill="#fff" opacity="0.26" filter="url(#blr2)"/>
<circle cx="1010.7" cy="622.2" r="5.5" fill="#fff" opacity="0.32" filter="url(#blr2)"/>
<circle cx="865.7" cy="167.4" r="5.5" fill="#fff" opacity="0.32" filter="url(#blr2)"/>
<circle cx="710.8" cy="467.3" r="5.5" fill="#fff" opacity="0.32" filter="url(#blr2)"/>
<circle cx="1030.6" cy="682.8" r="5.5" fill="#fff" opacity="0.29" filter="url(#blr2)"/>
<circle cx="845.8" cy="106.8" r="5.5" fill="#fff" opacity="0.29" filter="url(#blr2)"/>
<circle cx="650.2" cy="487.2" r="5.5" fill="#fff" opacity="0.29" filter="url(#blr2)"/>
<circle cx="986.0" cy="536.2" r="5.5" fill="#fff" opacity="0.32" filter="url(#blr2)"/>
<circle cx="890.4" cy="253.4" r="5.5" fill="#fff" opacity="0.32" filter="url(#blr2)"/>
<circle cx="796.8" cy="442.6" r="5.5" fill="#fff" opacity="0.32" filter="url(#blr2)"/>
<circle cx="992.5" cy="489.0" r="5.5" fill="#fff" opacity="0.52" filter="url(#blr2)"/>
<circle cx="844.0" cy="449.1" r="5.5" fill="#fff" opacity="0.52" filter="url(#blr2)"/>
<circle cx="1029.7" cy="556.4" r="5.5" fill="#fff" opacity="0.34" filter="url(#blr2)"/>
<circle cx="846.7" cy="233.2" r="5.5" fill="#fff" opacity="0.34" filter="url(#blr2)"/>
<circle cx="776.6" cy="486.3" r="5.5" fill="#fff" opacity="0.34" filter="url(#blr2)"/>
<circle cx="1119.2" cy="430.8" r="5.5" fill="#fff" opacity="0.26" filter="url(#blr2)"/>
<circle cx="757.2" cy="358.8" r="5.5" fill="#fff" opacity="0.26" filter="url(#blr2)"/>
<circle cx="1195.4" cy="655.4" r="5.5" fill="#fff" opacity="0.20" filter="url(#blr2)"/>
<circle cx="681.0" cy="134.2" r="5.5" fill="#fff" opacity="0.20" filter="url(#blr2)"/>
<circle cx="677.6" cy="652.0" r="5.5" fill="#fff" opacity="0.20" filter="url(#blr2)"/>
<circle cx="1097.0" cy="220.9" r="5.5" fill="#fff" opacity="0.32" filter="url(#blr2)"/>
<circle cx="779.4" cy="568.7" r="5.5" fill="#fff" opacity="0.32" filter="url(#blr2)"/>
<circle cx="1112.1" cy="553.6" r="5.5" fill="#fff" opacity="0.32" filter="url(#blr2)"/>
<circle cx="1039.4" cy="282.9" r="5.5" fill="#fff" opacity="0.40" filter="url(#blr2)"/>
<circle cx="837.0" cy="506.7" r="5.5" fill="#fff" opacity="0.40" filter="url(#blr2)"/>
<circle cx="1050.1" cy="496.0" r="5.5" fill="#fff" opacity="0.40" filter="url(#blr2)"/>
<circle cx="1054.1" cy="268.3" r="5.5" fill="#fff" opacity="0.26" filter="url(#blr2)"/>
<circle cx="822.3" cy="521.3" r="5.5" fill="#fff" opacity="0.26" filter="url(#blr2)"/>
<circle cx="1064.7" cy="510.7" r="5.5" fill="#fff" opacity="0.26" filter="url(#blr2)"/>
<circle cx="1017.4" cy="186.5" r="5.5" fill="#fff" opacity="0.32" filter="url(#blr2)"/>
<circle cx="859.0" cy="603.1" r="5.5" fill="#fff" opacity="0.32" filter="url(#blr2)"/>
<circle cx="1146.5" cy="474.0" r="5.5" fill="#fff" opacity="0.32" filter="url(#blr2)"/>
<circle cx="1006.7" cy="218.1" r="5.5" fill="#fff" opacity="0.23" filter="url(#blr2)"/>
<circle cx="869.7" cy="571.5" r="5.5" fill="#fff" opacity="0.23" filter="url(#blr2)"/>
<circle cx="1114.9" cy="463.3" r="5.5" fill="#fff" opacity="0.23" filter="url(#blr2)"/>
<circle cx="1078.1" cy="318.2" r="5.5" fill="#fff" opacity="0.46" filter="url(#blr2)"/>
<circle cx="798.3" cy="471.4" r="5.5" fill="#fff" opacity="0.46" filter="url(#blr2)"/>
<circle cx="1000.5" cy="299.9" r="5.5" fill="#fff" opacity="0.49" filter="url(#blr2)"/>
<circle cx="875.9" cy="489.7" r="5.5" fill="#fff" opacity="0.49" filter="url(#blr2)"/>
<circle cx="1033.1" cy="457.1" r="5.5" fill="#fff" opacity="0.49" filter="url(#blr2)"/>
<circle cx="837.8" cy="556.0" r="5.5" fill="#fff" opacity="0.34" filter="url(#blr2)"/>
<circle cx="992.1" cy="256.2" r="5.5" fill="#fff" opacity="0.26" filter="url(#blr2)"/>
<circle cx="884.3" cy="533.4" r="5.5" fill="#fff" opacity="0.26" filter="url(#blr2)"/>
<circle cx="1076.8" cy="448.7" r="5.5" fill="#fff" opacity="0.26" filter="url(#blr2)"/>
<circle cx="789.3" cy="359.5" r="5.5" fill="#fff" opacity="0.34" filter="url(#blr2)"/>
<circle cx="1087.1" cy="430.1" r="5.5" fill="#fff" opacity="0.34" filter="url(#blr2)"/>
<circle cx="973.5" cy="245.9" r="5.5" fill="#fff" opacity="0.34" filter="url(#blr2)"/>
<circle cx="700.7" cy="340.4" r="5.5" fill="#fff" opacity="0.29" filter="url(#blr2)"/>
<circle cx="1175.7" cy="449.2" r="5.5" fill="#fff" opacity="0.29" filter="url(#blr2)"/>
<circle cx="992.6" cy="157.3" r="5.5" fill="#fff" opacity="0.29" filter="url(#blr2)"/>
<circle cx="748.4" cy="424.0" r="5.5" fill="#fff" opacity="0.32" filter="url(#blr2)"/>
<circle cx="1128.0" cy="365.6" r="5.5" fill="#fff" opacity="0.32" filter="url(#blr2)"/>
<circle cx="909.0" cy="205.0" r="5.5" fill="#fff" opacity="0.32" filter="url(#blr2)"/>
<circle cx="713.6" cy="431.5" r="5.5" fill="#fff" opacity="0.29" filter="url(#blr2)"/>
<circle cx="1162.8" cy="358.1" r="5.5" fill="#fff" opacity="0.29" filter="url(#blr2)"/>
<circle cx="901.5" cy="170.2" r="5.5" fill="#fff" opacity="0.29" filter="url(#blr2)"/>
<circle cx="724.8" cy="450.1" r="5.5" fill="#fff" opacity="0.26" filter="url(#blr2)"/>
<circle cx="1151.6" cy="339.5" r="5.5" fill="#fff" opacity="0.26" filter="url(#blr2)"/>
<circle cx="882.9" cy="181.4" r="5.5" fill="#fff" opacity="0.26" filter="url(#blr2)"/>
<circle cx="807.9" cy="414.1" r="5.5" fill="#fff" opacity="0.29" filter="url(#blr2)"/>
<circle cx="1068.5" cy="375.5" r="5.5" fill="#fff" opacity="0.29" filter="url(#blr2)"/>
<circle cx="918.9" cy="264.5" r="5.5" fill="#fff" opacity="0.29" filter="url(#blr2)"/>
<circle cx="810.4" cy="534.5" r="5.5" fill="#fff" opacity="0.26" filter="url(#blr2)"/>
<circle cx="1066.0" cy="255.1" r="5.5" fill="#fff" opacity="0.26" filter="url(#blr2)"/>
<circle cx="798.5" cy="267.0" r="5.5" fill="#fff" opacity="0.26" filter="url(#blr2)"/>
<circle cx="826.6" cy="388.0" r="5.5" fill="#fff" opacity="0.46" filter="url(#blr2)"/>
<circle cx="1049.8" cy="401.6" r="5.5" fill="#fff" opacity="0.46" filter="url(#blr2)"/>
<circle cx="945.0" cy="283.2" r="5.5" fill="#fff" opacity="0.46" filter="url(#blr2)"/>
<circle cx="822.8" cy="321.0" r="5.5" fill="#fff" opacity="0.46" filter="url(#blr2)"/>
<circle cx="1053.6" cy="468.6" r="5.5" fill="#fff" opacity="0.46" filter="url(#blr2)"/>
<circle cx="1012.0" cy="279.4" r="5.5" fill="#fff" opacity="0.46" filter="url(#blr2)"/>
<circle cx="803.0" cy="306.1" r="5.5" fill="#fff" opacity="0.40" filter="url(#blr2)"/>
<circle cx="1073.4" cy="483.5" r="5.5" fill="#fff" opacity="0.40" filter="url(#blr2)"/>
<circle cx="1026.9" cy="259.6" r="5.5" fill="#fff" opacity="0.40" filter="url(#blr2)"/>
<circle cx="760.7" cy="282.6" r="5.5" fill="#fff" opacity="0.40" filter="url(#blr2)"/>
<circle cx="693.7" cy="529.6" r="5.5" fill="#fff" opacity="0.34" filter="url(#blr2)"/>
<circle cx="1182.7" cy="260.0" r="5.5" fill="#fff" opacity="0.34" filter="url(#blr2)"/>
<circle cx="803.4" cy="150.3" r="5.5" fill="#fff" opacity="0.34" filter="url(#blr2)"/>
<circle cx="852.5" cy="621.4" r="5.5" fill="#fff" opacity="0.29" filter="url(#blr2)"/>
<circle cx="1023.9" cy="168.2" r="5.5" fill="#fff" opacity="0.29" filter="url(#blr2)"/>
<circle cx="711.6" cy="309.1" r="5.5" fill="#fff" opacity="0.29" filter="url(#blr2)"/>
<circle cx="826.9" cy="689.4" r="5.5" fill="#fff" opacity="0.32" filter="url(#blr2)"/>
<circle cx="1049.5" cy="100.2" r="5.5" fill="#fff" opacity="0.32" filter="url(#blr2)"/>
<circle cx="643.6" cy="283.5" r="5.5" fill="#fff" opacity="0.32" filter="url(#blr2)"/>
<circle cx="861.8" cy="674.6" r="5.5" fill="#fff" opacity="0.23" filter="url(#blr2)"/>
<circle cx="1014.6" cy="115.0" r="5.5" fill="#fff" opacity="0.23" filter="url(#blr2)"/>
<circle cx="658.4" cy="318.4" r="5.5" fill="#fff" opacity="0.23" filter="url(#blr2)"/>
<circle cx="841.7" cy="745.6" r="5.5" fill="#fff" opacity="0.23" filter="url(#blr2)"/>
<circle cx="1034.7" cy="44.0" r="5.5" fill="#fff" opacity="0.23" filter="url(#blr2)"/>
<circle cx="587.4" cy="298.3" r="5.5" fill="#fff" opacity="0.23" filter="url(#blr2)"/>
<circle cx="791.4" cy="709.2" r="5.5" fill="#fff" opacity="0.20" filter="url(#blr2)"/>
<circle cx="1085.0" cy="80.4" r="5.5" fill="#fff" opacity="0.20" filter="url(#blr2)"/>
<circle cx="623.8" cy="248.0" r="5.5" fill="#fff" opacity="0.20" filter="url(#blr2)"/>
<circle cx="816.1" cy="656.9" r="5.5" fill="#fff" opacity="0.17" filter="url(#blr2)"/>
<circle cx="1060.3" cy="132.7" r="5.5" fill="#fff" opacity="0.17" filter="url(#blr2)"/>
<circle cx="676.1" cy="272.7" r="5.5" fill="#fff" opacity="0.17" filter="url(#blr2)"/>
<circle cx="725.7" cy="264.4" r="5" fill="#fff" opacity="0.95" filter="url(#blr2)"/>
<circle cx="1155.8" cy="529.4" r="5" fill="#fff" opacity="0.95" filter="url(#blr2)"/>
<circle cx="821.2" cy="181.5" r="5" fill="#fff" opacity="0.95" filter="url(#blr2)"/>
<circle cx="1037.7" cy="582.3" r="5" fill="#fff" opacity="0.95" filter="url(#blr2)"/>
<circle cx="942.8" cy="149.7" r="5" fill="#fff" opacity="0.95" filter="url(#blr2)"/>
<circle cx="929.7" cy="650.8" r="5" fill="#fff" opacity="0.95" filter="url(#blr2)"/>
<circle cx="1072.7" cy="169.0" r="5" fill="#fff" opacity="0.95" filter="url(#blr2)"/>
<circle cx="803.9" cy="610.7" r="5" fill="#fff" opacity="0.95" filter="url(#blr2)"/>
<circle cx="1154.7" cy="275.6" r="5" fill="#fff" opacity="0.95" filter="url(#blr2)"/>
<circle cx="711.9" cy="516.0" r="5" fill="#fff" opacity="0.95" filter="url(#blr2)"/>
<circle cx="1185.4" cy="400.5" r="5" fill="#fff" opacity="0.95" filter="url(#blr2)"/>
<circle cx="728.0" cy="385.5" r="5" fill="#fff" opacity="0.95" filter="url(#blr2)"/>
<circle cx="887.4" cy="310.7" r="4.5" fill="#fff" opacity="0.9" filter="url(#blr2)"/>
<circle cx="880" cy="291.5" r="4.5" fill="#fff" opacity="0.7" filter="url(#blr2)"/>
<circle cx="971.9" cy="325.6" r="4.5" fill="#fff" opacity="0.8" filter="url(#blr2)"/>
<circle cx="980.7" cy="310.7" r="4.5" fill="#fff" opacity="0.6" filter="url(#blr2)"/>
<circle cx="1032.6" cy="338.9" r="4.5" fill="#fff" opacity="0.8" filter="url(#blr2)"/>
<circle cx="1020.7" cy="344.8" r="4.5" fill="#fff" opacity="0.6" filter="url(#blr2)"/>
<circle cx="1032.6" cy="393.7" r="4.5" fill="#fff" opacity="0.9" filter="url(#blr2)"/>
<circle cx="1014.8" cy="393.7" r="4.5" fill="#fff" opacity="0.8" filter="url(#blr2)"/>
<circle cx="989.6" cy="393.7" r="4.5" fill="#fff" opacity="0.7" filter="url(#blr2)"/>
<circle cx="860.7" cy="392.2" r="4.5" fill="#fff" opacity="0.8" filter="url(#blr2)"/>
<circle cx="845.9" cy="389.3" r="4.5" fill="#fff" opacity="0.7" filter="url(#blr2)"/>
<circle cx="844.4" cy="333" r="4.5" fill="#fff" opacity="0.7" filter="url(#blr2)"/>
<circle cx="902.2" cy="439.6" r="4.5" fill="#fff" opacity="0.8" filter="url(#blr2)"/>
<circle cx="885.9" cy="472.2" r="4.5" fill="#fff" opacity="0.8" filter="url(#blr2)"/>
<circle cx="871.1" cy="494.4" r="4.5" fill="#fff" opacity="0.7" filter="url(#blr2)"/>
<circle cx="958.5" cy="447" r="4.5" fill="#fff" opacity="0.8" filter="url(#blr2)"/>
<circle cx="973.3" cy="460.4" r="4.5" fill="#fff" opacity="0.8" filter="url(#blr2)"/>
<circle cx="1032.6" cy="451.5" r="4.5" fill="#fff" opacity="0.8" filter="url(#blr2)"/>
<circle cx="1014.8" cy="441.1" r="4.5" fill="#fff" opacity="0.6" filter="url(#blr2)"/>
<circle cx="848.9" cy="444" r="4.5" fill="#fff" opacity="0.7" filter="url(#blr2)"/>
<circle cx="869.6" cy="435.2" r="4.5" fill="#fff" opacity="0.6" filter="url(#blr2)"/>
<circle cx="973" cy="309.6" r="4.5" fill="#fff" opacity="0.5" filter="url(#blr2)"/>
</g>
<circle cx="937.5" cy="396" r="28" fill="#000" filter="url(#blr)"/><circle cx="937.5" cy="396" r="25" fill="#000"/>
<polygon points="335.44,35.90 356.89,48.74 378.34,61.58 399.79,74.42 421.24,87.27 442.69,100.11 464.14,112.96 485.59,125.81 507.04,138.66 528.48,151.52 549.92,164.37 571.36,177.23 592.80,190.10 614.24,202.96 635.67,215.84 657.10,228.72 678.53,241.60 699.95,254.50 721.36,267.40 742.77,280.31 764.17,293.23 785.56,306.17 806.95,319.13 828.32,332.10 849.68,345.09 871.02,358.11 892.35,371.15 913.66,384.22 934.95,397.32 956.23,410.45 977.49,423.61 998.73,436.79 1019.95,450.00 1041.16,463.24 1062.36,476.49 1083.54,489.77 1104.72,503.06 1125.89,516.36 1147.05,529.68 1168.20,543.00 1189.35,556.34 1210.49,569.68 1231.63,583.03 1252.77,596.39 1273.90,609.75 1295.03,623.11 1316.16,636.48 1337.29,649.85 1358.41,663.22 1379.53,676.60 1400.65,689.98 1421.77,703.36 1442.89,716.74 1464.01,730.13 1485.13,743.51 1506.24,756.90 1527.36,770.29 1538.04,752.95 1516.58,740.11 1495.13,727.27 1473.68,714.43 1452.23,701.59 1430.78,688.74 1409.33,675.89 1387.88,663.04 1366.44,650.19 1344.99,637.34 1323.55,624.48 1302.11,611.62 1280.67,598.76 1259.23,585.89 1237.80,573.02 1216.37,560.14 1194.95,547.25 1173.53,534.36 1152.11,521.46 1130.70,508.55 1109.30,495.62 1087.91,482.68 1066.53,469.73 1045.16,456.76 1023.80,443.76 1002.45,430.75 981.12,417.70 959.81,404.63 938.52,391.53 917.24,378.40 895.99,365.25 874.75,352.06 853.52,338.85 832.31,325.62 811.12,312.36 789.93,299.09 768.75,285.80 747.59,272.49 726.43,259.18 705.27,245.85 684.12,232.52 662.98,219.17 641.84,205.82 620.71,192.47 599.57,179.11 578.44,165.75 557.31,152.38 536.19,139.01 515.06,125.63 493.94,112.26 472.82,98.88 451.70,85.50 430.58,72.11 409.46,58.73 388.35,45.34 367.23,31.95 346.12,18.57" fill="#ff8a0a" fill-opacity="0.55" stroke="#101828" stroke-opacity="0.25" stroke-width="0.6"/>
<polygon points="594.57,-216.63 606.74,-194.78 618.90,-172.94 631.06,-151.10 643.23,-129.25 655.38,-107.41 667.54,-85.56 679.70,-63.71 691.85,-41.86 704.00,-20.01 716.15,1.84 728.29,23.70 740.43,45.55 752.57,67.41 764.70,89.27 776.82,111.14 788.94,133.01 801.05,154.88 813.15,176.76 825.24,198.64 837.32,220.53 849.38,242.43 861.43,264.34 873.46,286.25 885.46,308.18 897.44,330.12 909.40,352.08 921.33,374.05 933.22,396.04 945.09,418.04 956.93,440.06 968.73,462.10 980.52,484.15 992.27,506.21 1004.01,528.29 1015.73,550.37 1027.42,572.47 1039.11,594.57 1050.78,616.68 1062.45,638.79 1074.10,660.91 1085.74,683.04 1097.38,705.16 1109.02,727.29 1120.64,749.43 1132.27,771.56 1143.89,793.70 1155.50,815.84 1167.12,837.98 1178.73,860.12 1190.33,882.27 1201.94,904.41 1213.54,926.56 1225.14,948.71 1236.75,970.85 1248.34,993.00 1259.94,1015.15 1277.86,1005.48 1265.69,983.63 1253.53,961.79 1241.37,939.94 1229.21,918.10 1217.05,896.25 1204.89,874.41 1192.73,852.56 1180.58,830.71 1168.43,808.86 1156.28,787.01 1144.14,765.15 1132.00,743.29 1119.86,721.44 1107.73,699.57 1095.61,677.71 1083.49,655.84 1071.38,633.97 1059.28,612.09 1047.19,590.21 1035.11,568.32 1023.05,546.42 1011.00,524.51 998.97,502.59 986.97,480.67 974.99,458.72 963.03,436.77 951.10,414.80 939.21,392.81 927.34,370.80 915.50,348.78 903.70,326.75 891.91,304.70 880.16,282.63 868.42,260.56 856.71,238.47 845.01,216.38 833.32,194.28 821.65,172.17 809.98,150.05 798.33,127.93 786.69,105.81 775.05,83.68 763.41,61.55 751.79,39.42 740.16,17.28 728.54,-4.85 716.93,-26.99 705.32,-49.13 693.70,-71.28 682.10,-93.42 670.49,-115.57 658.89,-137.71 647.29,-159.86 635.68,-182.01 624.09,-204.16 612.49,-226.30" fill="#ff8a0a" fill-opacity="0.55" stroke="#101828" stroke-opacity="0.25" stroke-width="0.6"/>
<polygon points="944.53,-306.04 944.20,-281.04 943.87,-256.04 943.53,-231.04 943.20,-206.04 942.86,-181.04 942.52,-156.04 942.18,-131.04 941.83,-106.04 941.48,-81.05 941.13,-56.05 940.78,-31.05 940.42,-6.05 940.05,18.95 939.68,43.95 939.30,68.95 938.92,93.95 938.53,118.95 938.12,143.94 937.70,168.94 937.27,193.94 936.83,218.94 936.36,243.93 935.87,268.93 935.36,293.92 934.82,318.92 934.25,343.91 933.65,368.90 933.01,393.90 932.34,418.89 931.64,443.88 930.90,468.87 930.14,493.85 929.34,518.84 928.52,543.83 927.68,568.82 926.82,593.80 925.94,618.79 925.05,643.77 924.15,668.76 923.24,693.74 922.32,718.73 921.39,743.71 920.45,768.70 919.51,793.68 918.56,818.66 917.61,843.65 916.66,868.63 915.70,893.61 914.74,918.60 913.77,943.58 912.80,968.56 911.84,993.55 910.87,1018.53 909.89,1043.51 908.92,1068.50 907.94,1093.48 928.30,1094.01 928.63,1069.01 928.96,1044.01 929.30,1019.01 929.63,994.01 929.97,969.01 930.31,944.01 930.65,919.01 931.00,894.01 931.34,869.01 931.70,844.02 932.05,819.02 932.41,794.02 932.78,769.02 933.15,744.02 933.52,719.02 933.91,694.02 934.30,669.02 934.71,644.03 935.12,619.03 935.55,594.03 936.00,569.03 936.47,544.04 936.95,519.04 937.47,494.05 938.00,469.05 938.57,444.06 939.18,419.07 939.81,394.07 940.48,369.08 941.19,344.09 941.92,319.10 942.69,294.11 943.49,269.13 944.31,244.14 945.15,219.15 946.01,194.17 946.88,169.18 947.77,144.20 948.68,119.21 949.59,94.23 950.51,69.24 951.44,44.26 952.38,19.27 953.32,-5.71 954.26,-30.69 955.22,-55.68 956.17,-80.66 957.13,-105.64 958.09,-130.63 959.06,-155.61 960.02,-180.59 960.99,-205.58 961.96,-230.56 962.94,-255.54 963.91,-280.53 964.89,-305.51" fill="#ff8a0a" fill-opacity="0.55" stroke="#101828" stroke-opacity="0.25" stroke-width="0.6"/>
<polygon points="1291.31,-209.81 1278.59,-188.29 1265.87,-166.77 1253.14,-145.24 1240.42,-123.72 1227.69,-102.20 1214.96,-80.68 1202.23,-59.16 1189.50,-37.65 1176.76,-16.13 1164.03,5.38 1151.28,26.89 1138.54,48.40 1125.79,69.91 1113.03,91.41 1100.27,112.91 1087.51,134.41 1074.73,155.90 1061.95,177.38 1049.15,198.86 1036.35,220.33 1023.53,241.80 1010.69,263.25 997.84,284.70 984.96,306.12 972.06,327.54 959.14,348.94 946.18,370.32 933.20,391.69 920.19,413.04 907.15,434.37 894.08,455.68 880.99,476.98 867.87,498.26 854.73,519.53 841.58,540.79 828.40,562.04 815.22,583.28 802.02,604.51 788.81,625.74 775.59,646.96 762.36,668.17 749.13,689.39 735.89,710.60 722.65,731.80 709.40,753.01 696.15,774.21 682.90,795.41 669.64,816.60 656.38,837.80 643.12,858.99 629.85,880.19 616.59,901.38 603.32,922.57 590.05,943.76 576.78,964.95 563.51,986.14 580.90,996.72 593.62,975.20 606.34,953.68 619.07,932.15 631.79,910.63 644.52,889.11 657.25,867.59 669.98,846.08 682.71,824.56 695.45,803.04 708.19,781.53 720.93,760.02 733.67,738.51 746.42,717.00 759.18,695.50 771.94,674.00 784.71,652.51 797.48,631.01 810.26,609.53 823.06,588.05 835.86,566.58 848.68,545.11 861.52,523.66 874.38,502.22 887.25,480.79 900.15,459.37 913.08,437.97 926.03,416.59 939.01,395.22 952.02,373.88 965.06,352.55 978.13,331.23 991.22,309.94 1004.34,288.65 1017.48,267.38 1030.64,246.13 1043.81,224.88 1057.00,203.64 1070.20,182.40 1083.40,161.18 1096.62,139.95 1109.85,118.74 1123.08,97.53 1136.32,76.32 1149.56,55.11 1162.81,33.91 1176.06,12.70 1189.32,-8.49 1202.57,-29.69 1215.83,-50.89 1229.10,-72.08 1242.36,-93.28 1255.63,-114.47 1268.89,-135.66 1282.16,-156.85 1295.43,-178.04 1308.71,-199.23" fill="#ff8a0a" fill-opacity="0.55" stroke="#101828" stroke-opacity="0.25" stroke-width="0.6"/>
<polygon points="1547.24,50.90 1525.42,63.11 1503.60,75.32 1481.79,87.53 1459.97,99.74 1438.15,111.95 1416.32,124.15 1394.50,136.35 1372.68,148.55 1350.85,160.75 1329.03,172.94 1307.20,185.13 1285.37,197.32 1263.53,209.50 1241.70,221.68 1219.86,233.85 1198.02,246.01 1176.17,258.17 1154.32,270.31 1132.46,282.45 1110.60,294.57 1088.72,306.68 1066.84,318.78 1044.95,330.85 1023.05,342.90 1001.13,354.93 979.20,366.93 957.25,378.91 935.29,390.85 913.31,402.76 891.32,414.65 869.31,426.50 847.28,438.33 825.24,450.13 803.19,461.92 781.13,473.68 759.06,485.43 736.98,497.16 714.90,508.88 692.81,520.59 670.72,532.29 648.62,543.98 626.51,555.66 604.41,567.34 582.30,579.02 560.19,590.69 538.08,602.36 515.96,614.02 493.84,625.68 471.73,637.33 449.61,648.99 427.49,660.64 405.37,672.29 383.24,683.94 361.12,695.59 339.00,707.24 316.87,718.88 326.59,736.78 348.40,724.56 370.22,712.35 392.04,700.14 413.86,687.94 435.68,675.73 457.50,663.53 479.32,651.33 501.15,639.13 522.97,626.93 544.80,614.74 566.63,602.55 588.46,590.36 610.29,578.18 632.13,566.00 653.97,553.83 675.81,541.67 697.66,529.51 719.51,517.36 741.37,505.23 763.23,493.10 785.10,480.99 806.98,468.90 828.87,456.83 850.78,444.77 872.69,432.74 894.63,420.74 916.57,408.77 938.53,396.83 960.51,384.91 982.51,373.03 1004.52,361.18 1026.55,349.35 1048.58,337.54 1070.63,325.76 1092.69,314.00 1114.76,302.25 1136.84,290.52 1158.92,278.80 1181.01,267.09 1203.11,255.39 1225.21,243.70 1247.31,232.01 1269.42,220.33 1291.52,208.66 1313.64,196.99 1335.75,185.32 1357.86,173.66 1379.98,162.00 1402.10,150.34 1424.22,138.69 1446.34,127.04 1468.46,115.38 1490.58,103.74 1512.71,92.09 1534.83,80.44 1556.95,68.80" fill="#ff8a0a" fill-opacity="0.55" stroke="#101828" stroke-opacity="0.25" stroke-width="0.6"/>
<polygon points="1637.01,405.12 1612.01,404.63 1587.02,404.13 1562.02,403.63 1537.02,403.13 1512.03,402.62 1487.03,402.12 1462.03,401.61 1437.04,401.10 1412.04,400.58 1387.04,400.06 1362.05,399.54 1337.05,399.02 1312.05,398.49 1287.06,397.95 1262.06,397.41 1237.07,396.86 1212.07,396.30 1187.08,395.72 1162.08,395.14 1137.09,394.55 1112.10,393.93 1087.10,393.30 1062.11,392.65 1037.12,391.97 1012.13,391.26 987.14,390.53 962.15,389.76 937.17,388.96 912.18,388.12 887.19,387.25 862.21,386.35 837.23,385.41 812.25,384.45 787.26,383.47 762.28,382.46 737.30,381.43 712.33,380.39 687.35,379.34 662.37,378.27 637.39,377.19 612.41,376.10 587.43,375.01 562.46,373.90 537.48,372.80 512.50,371.68 487.53,370.57 462.55,369.44 437.57,368.32 412.60,367.19 387.62,366.06 362.64,364.93 337.67,363.79 312.69,362.66 287.72,361.52 262.74,360.38 237.76,359.24 237.10,379.59 262.09,380.09 287.09,380.58 312.09,381.08 337.08,381.59 362.08,382.09 387.08,382.60 412.08,383.10 437.07,383.62 462.07,384.13 487.06,384.65 512.06,385.17 537.06,385.69 562.05,386.22 587.05,386.76 612.04,387.31 637.04,387.86 662.04,388.42 687.03,388.99 712.02,389.57 737.02,390.17 762.01,390.78 787.00,391.41 812.00,392.06 836.99,392.74 861.98,393.45 886.97,394.18 911.96,394.95 936.94,395.75 961.93,396.59 986.91,397.46 1011.90,398.36 1036.88,399.30 1061.86,400.26 1086.84,401.24 1111.82,402.25 1136.80,403.28 1161.78,404.32 1186.76,405.37 1211.74,406.44 1236.72,407.52 1261.70,408.61 1286.67,409.71 1311.65,410.81 1336.63,411.92 1361.60,413.03 1386.58,414.15 1411.56,415.27 1436.53,416.39 1461.51,417.52 1486.49,418.65 1511.46,419.78 1536.44,420.92 1561.42,422.05 1586.39,423.19 1611.37,424.33 1636.34,425.48" fill="#ff8a0a" fill-opacity="0.55" stroke="#101828" stroke-opacity="0.25" stroke-width="0.6"/>
<path d="M947 385 Q953 381 955.5 385.5 Q955 391 950 397 Q945 403 941 404.5 Q938.5 403 940.5 398 Q943 390 947 385 Z" fill="#ffdcb8" opacity="0.8"/>
<path d="M949 384 Q953.5 381.5 955 386 Q953.5 390 950.5 392.5 Q947.5 390 949 384 Z" fill="#fffaf4" opacity="0.85"/>
<line x1="-295.9" y1="-365.1" x2="1747.3" y2="893.9" stroke="#000" stroke-width="1.2" stroke-dasharray="4.5 1.5"/>
<line x1="250.9" y1="-874.3" x2="1391.5" y2="1237.3" stroke="#000" stroke-width="1.2" stroke-dasharray="4.5 1.5"/>
<line x1="974.2" y1="-1049.9" x2="911.4" y2="1349.3" stroke="#000" stroke-width="1.2" stroke-dasharray="4.5 1.5"/>
<line x1="1696.5" y1="-856.1" x2="448.9" y2="1194.1" stroke="#000" stroke-width="1.2" stroke-dasharray="4.5 1.5"/>
<line x1="2209.3" y1="-297.0" x2="100.1" y2="848.2" stroke="#000" stroke-width="1.2" stroke-dasharray="4.5 1.5"/>
<line x1="2384.8" y1="439.8" x2="-14.0" y2="361.2" stroke="#000" stroke-width="1.2" stroke-dasharray="4.5 1.5"/>
<circle cx="1246.7" cy="209.9" r="5.6" fill="none" stroke="#00f000" stroke-width="1.25"/>
<circle cx="1152.7" cy="394.8" r="5.6" fill="none" stroke="#00f000" stroke-width="1.25"/>
<circle cx="815.8" cy="354.1" r="5.6" fill="none" stroke="#00f000" stroke-width="1.25"/>
<circle cx="1156.2" cy="612.8" r="5.6" fill="none" stroke="#00f000" stroke-width="1.25"/>
<circle cx="1018.8" cy="233.8" r="5.6" fill="none" stroke="#00f000" stroke-width="1.25"/>
<circle cx="996.1" cy="568.3" r="5.6" fill="none" stroke="#00f000" stroke-width="1.25"/>
<circle cx="880.3" cy="221.3" r="5.6" fill="none" stroke="#00f000" stroke-width="1.25"/>
<circle cx="974.8" cy="358.2" r="5.6" fill="none" stroke="#00f000" stroke-width="1.25"/>
<circle cx="720.2" cy="176.8" r="5.6" fill="none" stroke="#00f000" stroke-width="1.25"/>
<circle cx="1060.6" cy="435.5" r="5.6" fill="none" stroke="#00f000" stroke-width="1.25"/>
<circle cx="723.7" cy="394.8" r="5.6" fill="none" stroke="#00f000" stroke-width="1.25"/>
<circle cx="629.7" cy="579.7" r="5.6" fill="none" stroke="#00f000" stroke-width="1.25"/>
<circle cx="938.2" cy="273.8" r="5.6" fill="none" stroke="#00f000" stroke-width="1.25"/>
<circle cx="1055.5" cy="161.1" r="5.6" fill="none" stroke="#00f000" stroke-width="1.25"/>
<circle cx="986.0" cy="347.0" r="5.6" fill="none" stroke="#00f000" stroke-width="1.25"/>
<circle cx="890.4" cy="347.0" r="5.6" fill="none" stroke="#00f000" stroke-width="1.25"/>
<circle cx="1018.8" cy="555.8" r="5.6" fill="none" stroke="#00f000" stroke-width="1.25"/>
<circle cx="881.4" cy="338.0" r="5.6" fill="none" stroke="#00f000" stroke-width="1.25"/>
<circle cx="857.6" cy="233.8" r="5.6" fill="none" stroke="#00f000" stroke-width="1.25"/>
<circle cx="846.2" cy="302.8" r="5.6" fill="none" stroke="#00f000" stroke-width="1.25"/>
<circle cx="820.9" cy="161.1" r="5.6" fill="none" stroke="#00f000" stroke-width="1.25"/>
<circle cx="1060.6" cy="354.1" r="5.6" fill="none" stroke="#00f000" stroke-width="1.25"/>
<circle cx="990.8" cy="131.5" r="5.6" fill="none" stroke="#00f000" stroke-width="1.25"/>
<circle cx="1059.2" cy="394.8" r="5.6" fill="none" stroke="#00f000" stroke-width="1.25"/>
<circle cx="777.2" cy="314.2" r="5.6" fill="none" stroke="#00f000" stroke-width="1.25"/>
<circle cx="842.2" cy="362.8" r="5.6" fill="none" stroke="#00f000" stroke-width="1.25"/>
<circle cx="1030.2" cy="486.8" r="5.6" fill="none" stroke="#00f000" stroke-width="1.25"/>
<circle cx="842.2" cy="426.8" r="5.6" fill="none" stroke="#00f000" stroke-width="1.25"/>
<circle cx="764.7" cy="452.7" r="5.6" fill="none" stroke="#00f000" stroke-width="1.25"/>
<circle cx="1008.2" cy="464.8" r="5.6" fill="none" stroke="#00f000" stroke-width="1.25"/>
<circle cx="857.6" cy="555.8" r="5.6" fill="none" stroke="#00f000" stroke-width="1.25"/>
<circle cx="938.2" cy="515.8" r="5.6" fill="none" stroke="#00f000" stroke-width="1.25"/>
<circle cx="881.4" cy="451.6" r="5.6" fill="none" stroke="#00f000" stroke-width="1.25"/>
<circle cx="995.0" cy="338.0" r="5.6" fill="none" stroke="#00f000" stroke-width="1.25"/>
<circle cx="901.6" cy="431.4" r="5.6" fill="none" stroke="#00f000" stroke-width="1.25"/>
<circle cx="720.2" cy="612.8" r="5.6" fill="none" stroke="#00f000" stroke-width="1.25"/>
<circle cx="629.7" cy="209.9" r="5.6" fill="none" stroke="#00f000" stroke-width="1.25"/>
<circle cx="996.1" cy="221.3" r="5.6" fill="none" stroke="#00f000" stroke-width="1.25"/>
<circle cx="704.5" cy="512.1" r="5.6" fill="none" stroke="#00f000" stroke-width="1.25"/>
<circle cx="938.2" cy="327.8" r="5.6" fill="none" stroke="#00f000" stroke-width="1.25"/>
<circle cx="995.0" cy="451.6" r="5.6" fill="none" stroke="#00f000" stroke-width="1.25"/>
<circle cx="817.2" cy="394.8" r="5.6" fill="none" stroke="#00f000" stroke-width="1.25"/>
<circle cx="897.5" cy="272.4" r="5.6" fill="none" stroke="#00f000" stroke-width="1.25"/>
<circle cx="777.2" cy="475.4" r="5.6" fill="none" stroke="#00f000" stroke-width="1.25"/>
<circle cx="885.6" cy="131.5" r="5.6" fill="none" stroke="#00f000" stroke-width="1.25"/>
<circle cx="800.3" cy="532.7" r="5.6" fill="none" stroke="#00f000" stroke-width="1.25"/>
<circle cx="978.9" cy="272.4" r="5.6" fill="none" stroke="#00f000" stroke-width="1.25"/>
<circle cx="901.6" cy="358.2" r="5.6" fill="none" stroke="#00f000" stroke-width="1.25"/>
<circle cx="704.5" cy="277.5" r="5.6" fill="none" stroke="#00f000" stroke-width="1.25"/>
<circle cx="1111.7" cy="452.7" r="5.6" fill="none" stroke="#00f000" stroke-width="1.25"/>
<circle cx="871.2" cy="394.8" r="5.6" fill="none" stroke="#00f000" stroke-width="1.25"/>
<circle cx="800.3" cy="256.9" r="5.6" fill="none" stroke="#00f000" stroke-width="1.25"/>
<circle cx="764.7" cy="336.9" r="5.6" fill="none" stroke="#00f000" stroke-width="1.25"/>
<circle cx="1171.9" cy="512.1" r="5.6" fill="none" stroke="#00f000" stroke-width="1.25"/>
<circle cx="897.5" cy="517.2" r="5.6" fill="none" stroke="#00f000" stroke-width="1.25"/>
<circle cx="990.8" cy="658.1" r="5.6" fill="none" stroke="#00f000" stroke-width="1.25"/>
<circle cx="868.2" cy="464.8" r="5.6" fill="none" stroke="#00f000" stroke-width="1.25"/>
<circle cx="1099.2" cy="314.2" r="5.6" fill="none" stroke="#00f000" stroke-width="1.25"/>
<circle cx="978.9" cy="517.2" r="5.6" fill="none" stroke="#00f000" stroke-width="1.25"/>
<circle cx="834.6" cy="497.8" r="5.6" fill="none" stroke="#00f000" stroke-width="1.25"/>
<circle cx="938.2" cy="609.3" r="5.6" fill="none" stroke="#00f000" stroke-width="1.25"/>
<circle cx="1171.9" cy="277.5" r="5.6" fill="none" stroke="#00f000" stroke-width="1.25"/>
<circle cx="880.3" cy="568.3" r="5.6" fill="none" stroke="#00f000" stroke-width="1.25"/>
<circle cx="1260.2" cy="287.4" r="5.6" fill="none" stroke="#00f000" stroke-width="1.25"/>
<circle cx="1246.7" cy="579.7" r="5.6" fill="none" stroke="#00f000" stroke-width="1.25"/>
<circle cx="1008.2" cy="324.8" r="5.6" fill="none" stroke="#00f000" stroke-width="1.25"/>
<circle cx="1156.2" cy="176.8" r="5.6" fill="none" stroke="#00f000" stroke-width="1.25"/>
<circle cx="1201.5" cy="447.4" r="5.6" fill="none" stroke="#00f000" stroke-width="1.25"/>
<circle cx="1030.2" cy="302.8" r="5.6" fill="none" stroke="#00f000" stroke-width="1.25"/>
<circle cx="1260.2" cy="502.2" r="5.6" fill="none" stroke="#00f000" stroke-width="1.25"/>
<circle cx="986.0" cy="442.6" r="5.6" fill="none" stroke="#00f000" stroke-width="1.25"/>
<circle cx="1201.5" cy="342.2" r="5.6" fill="none" stroke="#00f000" stroke-width="1.25"/>
<circle cx="1076.1" cy="532.7" r="5.6" fill="none" stroke="#00f000" stroke-width="1.25"/>
<circle cx="1005.2" cy="394.8" r="5.6" fill="none" stroke="#00f000" stroke-width="1.25"/>
<circle cx="674.9" cy="447.4" r="5.6" fill="none" stroke="#00f000" stroke-width="1.25"/>
<circle cx="868.2" cy="324.8" r="5.6" fill="none" stroke="#00f000" stroke-width="1.25"/>
<circle cx="616.2" cy="287.4" r="5.6" fill="none" stroke="#00f000" stroke-width="1.25"/>
<circle cx="1111.7" cy="336.9" r="5.6" fill="none" stroke="#00f000" stroke-width="1.25"/>
<circle cx="846.2" cy="486.8" r="5.6" fill="none" stroke="#00f000" stroke-width="1.25"/>
<circle cx="974.8" cy="431.4" r="5.6" fill="none" stroke="#00f000" stroke-width="1.25"/>
<circle cx="674.9" cy="342.2" r="5.6" fill="none" stroke="#00f000" stroke-width="1.25"/>
<circle cx="1076.1" cy="256.9" r="5.6" fill="none" stroke="#00f000" stroke-width="1.25"/>
<circle cx="1099.2" cy="475.4" r="5.6" fill="none" stroke="#00f000" stroke-width="1.25"/>
<circle cx="885.6" cy="658.1" r="5.6" fill="none" stroke="#00f000" stroke-width="1.25"/>
<circle cx="815.8" cy="435.5" r="5.6" fill="none" stroke="#00f000" stroke-width="1.25"/>
<circle cx="1055.5" cy="628.5" r="5.6" fill="none" stroke="#00f000" stroke-width="1.25"/>
<circle cx="616.2" cy="502.2" r="5.6" fill="none" stroke="#00f000" stroke-width="1.25"/>
<circle cx="938.2" cy="461.8" r="5.6" fill="none" stroke="#00f000" stroke-width="1.25"/>
<circle cx="890.4" cy="442.6" r="5.6" fill="none" stroke="#00f000" stroke-width="1.25"/>
<circle cx="820.9" cy="628.5" r="5.6" fill="none" stroke="#00f000" stroke-width="1.25"/>
<circle cx="938.2" cy="180.3" r="5.6" fill="none" stroke="#00f000" stroke-width="1.25"/>
<circle cx="725.7" cy="264.4" r="5.6" fill="none" stroke="#ff1010" stroke-width="1.4"/>
<circle cx="1155.8" cy="529.4" r="5.6" fill="none" stroke="#ff1010" stroke-width="1.4"/>
<circle cx="821.2" cy="181.5" r="5.6" fill="none" stroke="#ff1010" stroke-width="1.4"/>
<circle cx="1037.7" cy="582.3" r="5.6" fill="none" stroke="#ff1010" stroke-width="1.4"/>
<circle cx="942.8" cy="149.7" r="5.6" fill="none" stroke="#ff1010" stroke-width="1.4"/>
<circle cx="929.7" cy="650.8" r="5.6" fill="none" stroke="#ff1010" stroke-width="1.4"/>
<circle cx="1072.7" cy="169.0" r="5.6" fill="none" stroke="#ff1010" stroke-width="1.4"/>
<circle cx="803.9" cy="610.7" r="5.6" fill="none" stroke="#ff1010" stroke-width="1.4"/>
<circle cx="1154.7" cy="275.6" r="5.6" fill="none" stroke="#ff1010" stroke-width="1.4"/>
<circle cx="711.9" cy="516.0" r="5.6" fill="none" stroke="#ff1010" stroke-width="1.4"/>
<circle cx="1185.4" cy="400.5" r="5.6" fill="none" stroke="#ff1010" stroke-width="1.4"/>
<circle cx="728.0" cy="385.5" r="5.6" fill="none" stroke="#ff1010" stroke-width="1.4"/>
<circle cx="968.1" cy="393.9" r="5.6" fill="none" stroke="#ff1010" stroke-width="1.4"/>
<circle cx="937.8" cy="395" r="30" fill="none" stroke="#e81010" stroke-width="1.2"/>
<text x="951.5" y="434" font-size="27" fill="#000" stroke="#000" stroke-width="0.7" textLength="41.5" lengthAdjust="spacingAndGlyphs">100</text>
</g>
<rect x="522" y="124" width="1" height="543" fill="#ff0000" />
<rect x="1333" y="124" width="2" height="543" fill="#ff0000" />
<rect x="613.5" y="111.5" width="133" height="69" fill="#ffffe1" stroke="#000"/>
<text x="615.0" y="124.0" font-size="12" fill="#000" textLength="128.4" lengthAdjust="spacingAndGlyphs" >Zone mark mode. Left click</text>
<text x="615.0" y="136.9" font-size="12" fill="#000" textLength="108.7" lengthAdjust="spacingAndGlyphs" >and drag insert a zone</text>
<text x="615.0" y="149.8" font-size="12" fill="#000" textLength="124.8" lengthAdjust="spacingAndGlyphs" >marker with control points</text>
<text x="615.0" y="162.7" font-size="12" fill="#000" textLength="128.4" lengthAdjust="spacingAndGlyphs" >at drag start and drag end</text>
<text x="615.0" y="175.6" font-size="12" fill="#000" textLength="40.9" lengthAdjust="spacingAndGlyphs" >position.</text>
<rect x="0" y="0" width="3" height="709" fill="#0b5aa4" />
<rect x="0" y="0" width="1344" height="1" fill="#0b5aa4" />
<rect x="0" y="461" width="2" height="9" fill="#1a1a3a" />
<path d="M1336 709 L1344 701 M1340 709 L1344 705" stroke="#a0a0a0" stroke-width="1.2"/><path d="M1337.5 709 L1344 702.5 M1341.5 709 L1344 706.5" stroke="#fff" stroke-width="0.8"/>
<path d="M3 1 L9 1 Q3 1 3 7 Z" fill="#0b5aa4"/>
<path d="M1336 1 L1344 1 L1344 9 Q1344 1 1336 1 Z" fill="#0b5aa4"/>
<path d="M3 700 Q3 709 12 709 L3 709 Z" fill="#0b5aa4"/>
</svg></body></html>
